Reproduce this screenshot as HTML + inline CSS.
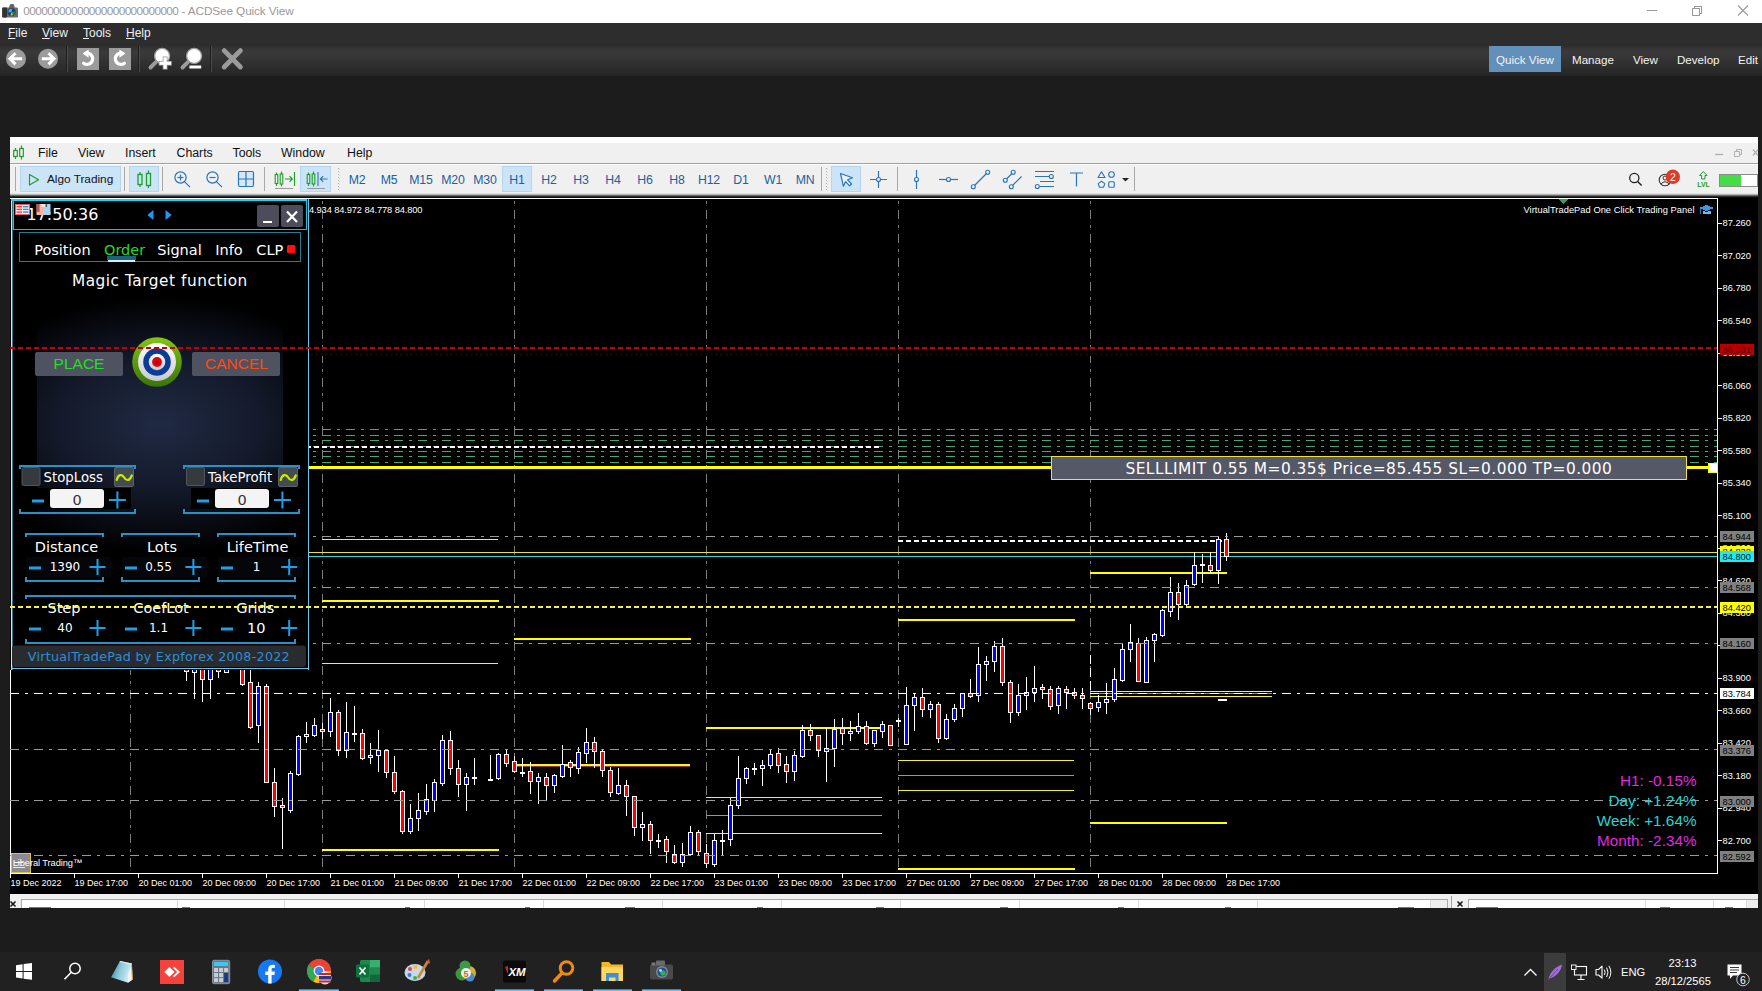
<!DOCTYPE html><html><head><meta charset="utf-8"><title>ACDSee Quick View</title><style>
html,body{margin:0;padding:0}
body{width:1762px;height:991px;overflow:hidden;background:#1c1c1c;position:relative;font-family:'Liberation Sans',sans-serif}
.abs{position:absolute}
#title{left:0;top:0;width:1762px;height:23px;background:#fff}
#title .t{position:absolute;left:23.3px;top:4.4px;font-size:11.8px;color:#999;white-space:nowrap;}
#menu{left:0;top:23px;width:1762px;height:21px;background:#2d2d2d}
#menu span{position:absolute;top:3px;font-size:12px;color:#f0f0f0}
#menu u{text-decoration:underline;text-underline-offset:1px}
#tb{left:0;top:44px;width:1762px;height:32px;background:linear-gradient(#2b2b2b,#3a3a3a 25%,#252525)}
#modes span{position:absolute;top:53px;font-size:11.6px;color:#f4f4f4;white-space:nowrap}
#qv{left:1489px;top:46px;width:72px;height:26px;background:#6390bb}
#mt{left:10px;top:137px;width:1748px;height:59px;background:#f0f0f0}
#mt .w{position:absolute;left:0;top:0;width:100%;height:6px;background:#fff}
#mt .ln{position:absolute;left:0;top:26px;width:100%;height:1px;background:#a0a0a0}
#mt .ln2{position:absolute;left:0;top:27px;width:100%;height:1px;background:#fff}
.mm{position:absolute;top:146px;font-size:12.3px;color:#111;white-space:nowrap}
.tf{position:absolute;top:166px;width:32px;height:26px;line-height:28px;text-align:center;font-size:12.3px;color:#22609c;letter-spacing:-0.2px}
.sel{background:#cce4f7;box-shadow:inset 0 0 0 1px #b4d6f0}
.vsep{position:absolute;top:167px;width:1px;height:24px;background:#a8a8a8}
#task{left:0;top:952px;width:1762px;height:39px;background:#212121}
#task .tx{position:absolute;color:#fff;font-size:12px;white-space:nowrap}
</style></head><body>
<div id="title" class="abs"><span class="t"><span id="zz" style="letter-spacing:-0.6px">00000000000000000000000000</span><span id="rest" style="letter-spacing:-0.12px"> - ACDSee Quick View</span></span></div>
<div id="menu" class="abs"><span style="left:8px"><u>F</u>ile</span><span style="left:42px"><u>V</u>iew</span><span style="left:83px"><u>T</u>ools</span><span style="left:126px"><u>H</u>elp</span></div>
<div id="tb" class="abs"></div>
<div id="qv" class="abs"></div>
<div id="modes"><span style="left:1496px">Quick View</span><span style="left:1572px">Manage</span><span style="left:1633px">View</span><span style="left:1677px">Develop</span><span style="left:1738px">Edit</span></div>
<div id="mt" class="abs"><div class="w"></div><div class="ln"></div><div class="ln2"></div></div>
<span class="mm" style="left:38px">File</span>
<span class="mm" style="left:78px">View</span>
<span class="mm" style="left:125px">Insert</span>
<span class="mm" style="left:176.5px">Charts</span>
<span class="mm" style="left:232.5px">Tools</span>
<span class="mm" style="left:281px">Window</span>
<span class="mm" style="left:347px">Help</span>
<div class="abs sel" style="left:20px;top:166px;width:101px;height:26px"></div>
<span class="mm" style="left:47px;top:172px;font-size:11.8px">Algo Trading</span>
<div class="abs sel" style="left:129px;top:166px;width:30px;height:26px"></div>
<div class="abs sel" style="left:300px;top:166px;width:31px;height:26px"></div>
<div class="abs sel" style="left:831px;top:166px;width:30px;height:26px"></div>
<div class="tf" style="left:341px">M2</div>
<div class="tf" style="left:373px">M5</div>
<div class="tf" style="left:405px">M15</div>
<div class="tf" style="left:437px">M20</div>
<div class="tf" style="left:469px">M30</div>
<div class="tf sel" style="left:502px;width:30px">H1</div>
<div class="tf" style="left:533px">H2</div>
<div class="tf" style="left:565px">H3</div>
<div class="tf" style="left:597px">H4</div>
<div class="tf" style="left:629px">H6</div>
<div class="tf" style="left:661px">H8</div>
<div class="tf" style="left:693px">H12</div>
<div class="tf" style="left:725px">D1</div>
<div class="tf" style="left:757px">W1</div>
<div class="tf" style="left:789px">MN</div>
<div class="vsep" style="left:15px"></div>
<div class="vsep" style="left:124px"></div>
<div class="vsep" style="left:162px"></div>
<div class="vsep" style="left:264px"></div>
<div class="vsep" style="left:821px"></div>
<div class="vsep" style="left:897px"></div>
<div class="vsep" style="left:1134px"></div>
<svg class="abs" style="left:0;top:0" width="1762" height="991" viewBox="0 0 1762 991" shape-rendering="crispEdges">
<g id="chart"><rect x="10" y="196" width="1748" height="698" fill="#000"/>
<rect x="10" y="193" width="1748" height="1" fill="#e2e2e2"/>
<rect x="10" y="194" width="1748" height="1" fill="#b4b4b4"/>
<rect x="10" y="195" width="1748" height="1" fill="#6a6a6a"/>
<rect x="10" y="196" width="1748" height="1" fill="#2c2c2c"/>
<rect x="10" y="197" width="1748" height="1" fill="#0c0c0c"/>
<rect x="10" y="198" width="1708" height="1" fill="#fff"/>
<rect x="1717" y="198" width="1" height="676" fill="#fff"/>
<rect x="10" y="873" width="1708" height="1" fill="#fff"/>
<rect x="10" y="199" width="1" height="675" fill="#fff"/>
<line x1="130.5" y1="199" x2="130.5" y2="873" stroke="#7c7c7c" stroke-width="1" stroke-dasharray="9 6 3 6" stroke-dashoffset="13"/>
<line x1="322.5" y1="199" x2="322.5" y2="873" stroke="#7c7c7c" stroke-width="1" stroke-dasharray="9 6 3 6" stroke-dashoffset="13"/>
<line x1="514.5" y1="199" x2="514.5" y2="873" stroke="#7c7c7c" stroke-width="1" stroke-dasharray="9 6 3 6" stroke-dashoffset="13"/>
<line x1="706.5" y1="199" x2="706.5" y2="873" stroke="#7c7c7c" stroke-width="1" stroke-dasharray="9 6 3 6" stroke-dashoffset="13"/>
<line x1="898.5" y1="199" x2="898.5" y2="873" stroke="#7c7c7c" stroke-width="1" stroke-dasharray="9 6 3 6" stroke-dashoffset="13"/>
<line x1="1090.5" y1="199" x2="1090.5" y2="873" stroke="#7c7c7c" stroke-width="1" stroke-dasharray="9 6 3 6" stroke-dashoffset="13"/>
<line x1="298" y1="429.5" x2="1717" y2="429.5" stroke="#4aa578" stroke-width="1" stroke-dasharray="8.5 6 3 6.5" stroke-dashoffset="0"/>
<line x1="298" y1="435.5" x2="1717" y2="435.5" stroke="#4aa578" stroke-width="1" stroke-dasharray="8.5 6 3 6.5" stroke-dashoffset="0"/>
<line x1="298" y1="440.5" x2="1717" y2="440.5" stroke="#4aa578" stroke-width="1" stroke-dasharray="8.5 6 3 6.5" stroke-dashoffset="0"/>
<line x1="298" y1="446.5" x2="1717" y2="446.5" stroke="#4aa578" stroke-width="1" stroke-dasharray="8.5 6 3 6.5" stroke-dashoffset="0"/>
<line x1="298" y1="451.5" x2="1717" y2="451.5" stroke="#4aa578" stroke-width="1" stroke-dasharray="8.5 6 3 6.5" stroke-dashoffset="0"/>
<line x1="298" y1="456.5" x2="1717" y2="456.5" stroke="#4aa578" stroke-width="1" stroke-dasharray="8.5 6 3 6.5" stroke-dashoffset="0"/>
<line x1="298" y1="462.5" x2="1717" y2="462.5" stroke="#4aa578" stroke-width="1" stroke-dasharray="8.5 6 3 6.5" stroke-dashoffset="0"/>
<line x1="298" y1="467.5" x2="1717" y2="467.5" stroke="#4aa578" stroke-width="1" stroke-dasharray="8.5 6 3 6.5" stroke-dashoffset="0"/>
<rect x="322" y="539" width="176" height="1" fill="#f4f03c"/>
<rect x="322" y="600" width="177" height="2" fill="#ffff00"/>
<rect x="322" y="663" width="176" height="1" fill="#f4f03c"/>
<rect x="322" y="849" width="177" height="2" fill="#ffff00"/>
<rect x="514" y="638" width="177" height="2" fill="#ffff00"/>
<rect x="514" y="764" width="176" height="2" fill="#f4f03c"/>
<rect x="514" y="766" width="176" height="1" fill="#8a3c14"/>
<rect x="706" y="727" width="177" height="2" fill="#ffff00"/>
<rect x="706" y="797" width="176" height="1" fill="#f4f03c"/>
<rect x="706" y="815" width="176" height="1" fill="#e08030"/>
<rect x="706" y="833" width="176" height="1" fill="#f4f03c"/>
<rect x="898" y="619" width="177" height="2" fill="#ffff00"/>
<rect x="898" y="760" width="176" height="1" fill="#f4f03c"/>
<rect x="898" y="775" width="176" height="1" fill="#e08030"/>
<rect x="898" y="790" width="176" height="1" fill="#f4f03c"/>
<rect x="898" y="868" width="177" height="2" fill="#ffff00"/>
<rect x="1090" y="572" width="137" height="2" fill="#ffff00"/>
<rect x="1090" y="822" width="137" height="2" fill="#ffff00"/>
<rect x="1090" y="691" width="182" height="1" fill="#f4f03c"/>
<rect x="1090" y="696" width="182" height="1" fill="#f4f03c"/>
<rect x="1090" y="693" width="182" height="1" fill="#e08030"/>
<line x1="1090" y1="693.5" x2="1272" y2="693.5" stroke="#ffffff" stroke-width="1" stroke-dasharray="9 6 3 6" stroke-dashoffset="0"/>
<line x1="1090.5" y1="655" x2="1090.5" y2="691" stroke="#ffffff" stroke-width="1" stroke-dasharray="9 4" stroke-dashoffset="0"/>
<rect x="308" y="552" width="1409" height="1" fill="#e8e040"/>
<rect x="308" y="556" width="1409" height="1" fill="#40d0d0"/>
<line x1="309" y1="447.0" x2="879" y2="447.0" stroke="#ffffff" stroke-width="2" stroke-dasharray="5 3" stroke-dashoffset="3"/>
<line x1="898" y1="541.0" x2="1222" y2="541.0" stroke="#ffffff" stroke-width="2" stroke-dasharray="5 3" stroke-dashoffset="0"/>
<rect x="308" y="466" width="1409" height="3" fill="#ffff00"/>
<rect x="186" y="660" width="1" height="21" fill="#fff"/>
<rect x="184" y="660" width="5" height="12" fill="#fff"/>
<rect x="185" y="661" width="3" height="10" fill="#ff0000"/>
<rect x="194" y="660" width="1" height="39" fill="#fff"/>
<rect x="192" y="660" width="5" height="13" fill="#fff"/>
<rect x="193" y="661" width="3" height="11" fill="#0000ff"/>
<rect x="202" y="660" width="1" height="42" fill="#fff"/>
<rect x="200" y="660" width="5" height="20" fill="#fff"/>
<rect x="201" y="661" width="3" height="18" fill="#ff0000"/>
<rect x="210" y="660" width="1" height="39" fill="#fff"/>
<rect x="208" y="660" width="5" height="20" fill="#fff"/>
<rect x="209" y="661" width="3" height="18" fill="#0000ff"/>
<rect x="218" y="660" width="1" height="18" fill="#fff"/>
<rect x="216" y="660" width="5" height="12" fill="#fff"/>
<rect x="217" y="661" width="3" height="10" fill="#ff0000"/>
<rect x="226" y="660" width="1" height="13" fill="#fff"/>
<rect x="224" y="660" width="5" height="13" fill="#fff"/>
<rect x="225" y="661" width="3" height="11" fill="#0000ff"/>
<rect x="242" y="660" width="1" height="26" fill="#fff"/>
<rect x="240" y="660" width="5" height="25" fill="#fff"/>
<rect x="241" y="661" width="3" height="23" fill="#ff0000"/>
<rect x="250" y="670" width="1" height="59" fill="#fff"/>
<rect x="248" y="682" width="5" height="46" fill="#fff"/>
<rect x="249" y="683" width="3" height="44" fill="#ff0000"/>
<rect x="258" y="682" width="1" height="61" fill="#fff"/>
<rect x="256" y="686" width="5" height="40" fill="#fff"/>
<rect x="257" y="687" width="3" height="38" fill="#0000ff"/>
<rect x="266" y="684" width="1" height="99" fill="#fff"/>
<rect x="264" y="686" width="5" height="97" fill="#fff"/>
<rect x="265" y="687" width="3" height="95" fill="#ff0000"/>
<rect x="274" y="768" width="1" height="49" fill="#fff"/>
<rect x="272" y="782" width="5" height="25" fill="#fff"/>
<rect x="273" y="783" width="3" height="23" fill="#ff0000"/>
<rect x="282" y="798" width="1" height="51" fill="#fff"/>
<rect x="280" y="805" width="5" height="3" fill="#fff"/>
<rect x="281" y="806" width="3" height="1" fill="#ff0000"/>
<rect x="290" y="771" width="1" height="42" fill="#fff"/>
<rect x="288" y="773" width="5" height="38" fill="#fff"/>
<rect x="289" y="774" width="3" height="36" fill="#0000ff"/>
<rect x="298" y="735" width="1" height="41" fill="#fff"/>
<rect x="296" y="736" width="5" height="39" fill="#fff"/>
<rect x="297" y="737" width="3" height="37" fill="#0000ff"/>
<rect x="306" y="722" width="1" height="21" fill="#fff"/>
<rect x="304" y="734" width="5" height="3" fill="#fff"/>
<rect x="305" y="735" width="3" height="1" fill="#0000ff"/>
<rect x="314" y="718" width="1" height="19" fill="#fff"/>
<rect x="312" y="725" width="5" height="11" fill="#fff"/>
<rect x="313" y="726" width="3" height="9" fill="#0000ff"/>
<rect x="322" y="723" width="1" height="16" fill="#fff"/>
<rect x="320" y="729" width="5" height="3" fill="#fff"/>
<rect x="321" y="730" width="3" height="1" fill="#ff0000"/>
<rect x="330" y="698" width="1" height="39" fill="#fff"/>
<rect x="328" y="712" width="5" height="20" fill="#fff"/>
<rect x="329" y="713" width="3" height="18" fill="#0000ff"/>
<rect x="338" y="710" width="1" height="46" fill="#fff"/>
<rect x="336" y="712" width="5" height="39" fill="#fff"/>
<rect x="337" y="713" width="3" height="37" fill="#ff0000"/>
<rect x="346" y="702" width="1" height="56" fill="#fff"/>
<rect x="344" y="732" width="5" height="19" fill="#fff"/>
<rect x="345" y="733" width="3" height="17" fill="#0000ff"/>
<rect x="354" y="706" width="1" height="36" fill="#fff"/>
<rect x="352" y="733" width="5" height="2" fill="#fff"/>
<rect x="362" y="729" width="1" height="31" fill="#fff"/>
<rect x="360" y="733" width="5" height="26" fill="#fff"/>
<rect x="361" y="734" width="3" height="24" fill="#ff0000"/>
<rect x="370" y="743" width="1" height="21" fill="#fff"/>
<rect x="368" y="755" width="5" height="3" fill="#fff"/>
<rect x="369" y="756" width="3" height="1" fill="#0000ff"/>
<rect x="378" y="730" width="1" height="42" fill="#fff"/>
<rect x="376" y="750" width="5" height="6" fill="#fff"/>
<rect x="377" y="751" width="3" height="4" fill="#0000ff"/>
<rect x="386" y="749" width="1" height="29" fill="#fff"/>
<rect x="384" y="750" width="5" height="23" fill="#fff"/>
<rect x="385" y="751" width="3" height="21" fill="#ff0000"/>
<rect x="394" y="756" width="1" height="38" fill="#fff"/>
<rect x="392" y="772" width="5" height="20" fill="#fff"/>
<rect x="393" y="773" width="3" height="18" fill="#ff0000"/>
<rect x="402" y="790" width="1" height="44" fill="#fff"/>
<rect x="400" y="791" width="5" height="41" fill="#fff"/>
<rect x="401" y="792" width="3" height="39" fill="#ff0000"/>
<rect x="410" y="804" width="1" height="30" fill="#fff"/>
<rect x="408" y="818" width="5" height="14" fill="#fff"/>
<rect x="409" y="819" width="3" height="12" fill="#0000ff"/>
<rect x="418" y="793" width="1" height="38" fill="#fff"/>
<rect x="416" y="810" width="5" height="9" fill="#fff"/>
<rect x="417" y="811" width="3" height="7" fill="#0000ff"/>
<rect x="426" y="784" width="1" height="31" fill="#fff"/>
<rect x="424" y="799" width="5" height="13" fill="#fff"/>
<rect x="425" y="800" width="3" height="11" fill="#0000ff"/>
<rect x="434" y="779" width="1" height="33" fill="#fff"/>
<rect x="432" y="782" width="5" height="19" fill="#fff"/>
<rect x="433" y="783" width="3" height="17" fill="#0000ff"/>
<rect x="442" y="735" width="1" height="51" fill="#fff"/>
<rect x="440" y="740" width="5" height="44" fill="#fff"/>
<rect x="441" y="741" width="3" height="42" fill="#0000ff"/>
<rect x="450" y="731" width="1" height="44" fill="#fff"/>
<rect x="448" y="740" width="5" height="29" fill="#fff"/>
<rect x="449" y="741" width="3" height="27" fill="#ff0000"/>
<rect x="458" y="760" width="1" height="37" fill="#fff"/>
<rect x="456" y="768" width="5" height="17" fill="#fff"/>
<rect x="457" y="769" width="3" height="15" fill="#ff0000"/>
<rect x="466" y="773" width="1" height="38" fill="#fff"/>
<rect x="464" y="777" width="5" height="8" fill="#fff"/>
<rect x="465" y="778" width="3" height="6" fill="#0000ff"/>
<rect x="474" y="758" width="1" height="27" fill="#fff"/>
<rect x="472" y="777" width="5" height="2" fill="#fff"/>
<rect x="490" y="755" width="1" height="25" fill="#fff"/>
<rect x="488" y="779" width="5" height="2" fill="#fff"/>
<rect x="498" y="753" width="1" height="27" fill="#fff"/>
<rect x="496" y="754" width="5" height="25" fill="#fff"/>
<rect x="497" y="755" width="3" height="23" fill="#0000ff"/>
<rect x="506" y="749" width="1" height="18" fill="#fff"/>
<rect x="504" y="754" width="5" height="10" fill="#fff"/>
<rect x="505" y="755" width="3" height="8" fill="#ff0000"/>
<rect x="514" y="756" width="1" height="17" fill="#fff"/>
<rect x="512" y="761" width="5" height="11" fill="#fff"/>
<rect x="513" y="762" width="3" height="9" fill="#ff0000"/>
<rect x="522" y="758" width="1" height="19" fill="#fff"/>
<rect x="520" y="772" width="5" height="2" fill="#fff"/>
<rect x="530" y="762" width="1" height="32" fill="#fff"/>
<rect x="528" y="771" width="5" height="11" fill="#fff"/>
<rect x="529" y="772" width="3" height="9" fill="#ff0000"/>
<rect x="538" y="773" width="1" height="31" fill="#fff"/>
<rect x="536" y="777" width="5" height="5" fill="#fff"/>
<rect x="537" y="778" width="3" height="3" fill="#0000ff"/>
<rect x="546" y="773" width="1" height="28" fill="#fff"/>
<rect x="544" y="777" width="5" height="9" fill="#fff"/>
<rect x="545" y="778" width="3" height="7" fill="#ff0000"/>
<rect x="554" y="774" width="1" height="19" fill="#fff"/>
<rect x="552" y="775" width="5" height="11" fill="#fff"/>
<rect x="553" y="776" width="3" height="9" fill="#0000ff"/>
<rect x="562" y="745" width="1" height="33" fill="#fff"/>
<rect x="560" y="764" width="5" height="13" fill="#fff"/>
<rect x="561" y="765" width="3" height="11" fill="#0000ff"/>
<rect x="570" y="760" width="1" height="17" fill="#fff"/>
<rect x="568" y="762" width="5" height="6" fill="#fff"/>
<rect x="569" y="763" width="3" height="4" fill="#ff0000"/>
<rect x="578" y="747" width="1" height="27" fill="#fff"/>
<rect x="576" y="752" width="5" height="17" fill="#fff"/>
<rect x="577" y="753" width="3" height="15" fill="#0000ff"/>
<rect x="586" y="728" width="1" height="35" fill="#fff"/>
<rect x="584" y="742" width="5" height="12" fill="#fff"/>
<rect x="585" y="743" width="3" height="10" fill="#0000ff"/>
<rect x="594" y="737" width="1" height="31" fill="#fff"/>
<rect x="592" y="742" width="5" height="10" fill="#fff"/>
<rect x="593" y="743" width="3" height="8" fill="#ff0000"/>
<rect x="602" y="749" width="1" height="28" fill="#fff"/>
<rect x="600" y="751" width="5" height="20" fill="#fff"/>
<rect x="601" y="752" width="3" height="18" fill="#ff0000"/>
<rect x="610" y="767" width="1" height="30" fill="#fff"/>
<rect x="608" y="770" width="5" height="23" fill="#fff"/>
<rect x="609" y="771" width="3" height="21" fill="#ff0000"/>
<rect x="618" y="768" width="1" height="27" fill="#fff"/>
<rect x="616" y="785" width="5" height="9" fill="#fff"/>
<rect x="617" y="786" width="3" height="7" fill="#0000ff"/>
<rect x="626" y="780" width="1" height="36" fill="#fff"/>
<rect x="624" y="785" width="5" height="12" fill="#fff"/>
<rect x="625" y="786" width="3" height="10" fill="#ff0000"/>
<rect x="634" y="796" width="1" height="40" fill="#fff"/>
<rect x="632" y="796" width="5" height="32" fill="#fff"/>
<rect x="633" y="797" width="3" height="30" fill="#ff0000"/>
<rect x="642" y="812" width="1" height="29" fill="#fff"/>
<rect x="640" y="824" width="5" height="4" fill="#fff"/>
<rect x="641" y="825" width="3" height="2" fill="#0000ff"/>
<rect x="650" y="821" width="1" height="33" fill="#fff"/>
<rect x="648" y="824" width="5" height="17" fill="#fff"/>
<rect x="649" y="825" width="3" height="15" fill="#ff0000"/>
<rect x="658" y="834" width="1" height="14" fill="#fff"/>
<rect x="656" y="840" width="5" height="2" fill="#fff"/>
<rect x="666" y="836" width="1" height="27" fill="#fff"/>
<rect x="664" y="839" width="5" height="13" fill="#fff"/>
<rect x="665" y="840" width="3" height="11" fill="#ff0000"/>
<rect x="674" y="845" width="1" height="19" fill="#fff"/>
<rect x="672" y="854" width="5" height="9" fill="#fff"/>
<rect x="673" y="855" width="3" height="7" fill="#ff0000"/>
<rect x="682" y="843" width="1" height="24" fill="#fff"/>
<rect x="680" y="854" width="5" height="9" fill="#fff"/>
<rect x="681" y="855" width="3" height="7" fill="#0000ff"/>
<rect x="690" y="826" width="1" height="30" fill="#fff"/>
<rect x="688" y="832" width="5" height="23" fill="#fff"/>
<rect x="689" y="833" width="3" height="21" fill="#0000ff"/>
<rect x="698" y="830" width="1" height="26" fill="#fff"/>
<rect x="696" y="832" width="5" height="20" fill="#fff"/>
<rect x="697" y="833" width="3" height="18" fill="#ff0000"/>
<rect x="706" y="844" width="1" height="24" fill="#fff"/>
<rect x="704" y="853" width="5" height="11" fill="#fff"/>
<rect x="705" y="854" width="3" height="9" fill="#ff0000"/>
<rect x="714" y="834" width="1" height="33" fill="#fff"/>
<rect x="712" y="840" width="5" height="25" fill="#fff"/>
<rect x="713" y="841" width="3" height="23" fill="#0000ff"/>
<rect x="722" y="830" width="1" height="26" fill="#fff"/>
<rect x="720" y="840" width="5" height="2" fill="#fff"/>
<rect x="730" y="798" width="1" height="48" fill="#fff"/>
<rect x="728" y="805" width="5" height="35" fill="#fff"/>
<rect x="729" y="806" width="3" height="33" fill="#0000ff"/>
<rect x="738" y="756" width="1" height="53" fill="#fff"/>
<rect x="736" y="778" width="5" height="28" fill="#fff"/>
<rect x="737" y="779" width="3" height="26" fill="#0000ff"/>
<rect x="746" y="767" width="1" height="17" fill="#fff"/>
<rect x="744" y="768" width="5" height="11" fill="#fff"/>
<rect x="745" y="769" width="3" height="9" fill="#0000ff"/>
<rect x="754" y="763" width="1" height="12" fill="#fff"/>
<rect x="752" y="768" width="5" height="2" fill="#fff"/>
<rect x="762" y="760" width="1" height="26" fill="#fff"/>
<rect x="760" y="765" width="5" height="4" fill="#fff"/>
<rect x="761" y="766" width="3" height="2" fill="#0000ff"/>
<rect x="770" y="749" width="1" height="20" fill="#fff"/>
<rect x="768" y="754" width="5" height="12" fill="#fff"/>
<rect x="769" y="755" width="3" height="10" fill="#0000ff"/>
<rect x="778" y="748" width="1" height="25" fill="#fff"/>
<rect x="776" y="753" width="5" height="13" fill="#fff"/>
<rect x="777" y="754" width="3" height="11" fill="#ff0000"/>
<rect x="786" y="756" width="1" height="27" fill="#fff"/>
<rect x="784" y="764" width="5" height="8" fill="#fff"/>
<rect x="785" y="765" width="3" height="6" fill="#ff0000"/>
<rect x="794" y="751" width="1" height="30" fill="#fff"/>
<rect x="792" y="755" width="5" height="17" fill="#fff"/>
<rect x="793" y="756" width="3" height="15" fill="#0000ff"/>
<rect x="802" y="725" width="1" height="33" fill="#fff"/>
<rect x="800" y="730" width="5" height="27" fill="#fff"/>
<rect x="801" y="731" width="3" height="25" fill="#0000ff"/>
<rect x="810" y="724" width="1" height="17" fill="#fff"/>
<rect x="808" y="730" width="5" height="6" fill="#fff"/>
<rect x="809" y="731" width="3" height="4" fill="#ff0000"/>
<rect x="818" y="735" width="1" height="22" fill="#fff"/>
<rect x="816" y="735" width="5" height="16" fill="#fff"/>
<rect x="817" y="736" width="3" height="14" fill="#ff0000"/>
<rect x="826" y="728" width="1" height="54" fill="#fff"/>
<rect x="824" y="748" width="5" height="4" fill="#fff"/>
<rect x="825" y="749" width="3" height="2" fill="#0000ff"/>
<rect x="834" y="719" width="1" height="48" fill="#fff"/>
<rect x="832" y="729" width="5" height="20" fill="#fff"/>
<rect x="833" y="730" width="3" height="18" fill="#0000ff"/>
<rect x="842" y="718" width="1" height="27" fill="#fff"/>
<rect x="840" y="728" width="5" height="6" fill="#fff"/>
<rect x="841" y="729" width="3" height="4" fill="#ff0000"/>
<rect x="850" y="721" width="1" height="20" fill="#fff"/>
<rect x="848" y="731" width="5" height="3" fill="#fff"/>
<rect x="849" y="732" width="3" height="1" fill="#0000ff"/>
<rect x="858" y="713" width="1" height="21" fill="#fff"/>
<rect x="856" y="726" width="5" height="6" fill="#fff"/>
<rect x="857" y="727" width="3" height="4" fill="#0000ff"/>
<rect x="866" y="721" width="1" height="24" fill="#fff"/>
<rect x="864" y="726" width="5" height="18" fill="#fff"/>
<rect x="865" y="727" width="3" height="16" fill="#ff0000"/>
<rect x="874" y="730" width="1" height="17" fill="#fff"/>
<rect x="872" y="730" width="5" height="14" fill="#fff"/>
<rect x="873" y="731" width="3" height="12" fill="#0000ff"/>
<rect x="882" y="721" width="1" height="17" fill="#fff"/>
<rect x="880" y="724" width="5" height="8" fill="#fff"/>
<rect x="881" y="725" width="3" height="6" fill="#0000ff"/>
<rect x="890" y="725" width="1" height="21" fill="#fff"/>
<rect x="888" y="725" width="5" height="21" fill="#fff"/>
<rect x="889" y="726" width="3" height="19" fill="#ff0000"/>
<rect x="898" y="718" width="1" height="9" fill="#fff"/>
<rect x="896" y="720" width="5" height="2" fill="#fff"/>
<rect x="906" y="687" width="1" height="58" fill="#fff"/>
<rect x="904" y="705" width="5" height="40" fill="#fff"/>
<rect x="905" y="706" width="3" height="38" fill="#0000ff"/>
<rect x="914" y="693" width="1" height="38" fill="#fff"/>
<rect x="912" y="697" width="5" height="9" fill="#fff"/>
<rect x="913" y="698" width="3" height="7" fill="#0000ff"/>
<rect x="922" y="688" width="1" height="29" fill="#fff"/>
<rect x="920" y="697" width="5" height="13" fill="#fff"/>
<rect x="921" y="698" width="3" height="11" fill="#ff0000"/>
<rect x="930" y="701" width="1" height="17" fill="#fff"/>
<rect x="928" y="704" width="5" height="6" fill="#fff"/>
<rect x="929" y="705" width="3" height="4" fill="#0000ff"/>
<rect x="938" y="702" width="1" height="41" fill="#fff"/>
<rect x="936" y="704" width="5" height="35" fill="#fff"/>
<rect x="937" y="705" width="3" height="33" fill="#ff0000"/>
<rect x="946" y="714" width="1" height="26" fill="#fff"/>
<rect x="944" y="719" width="5" height="20" fill="#fff"/>
<rect x="945" y="720" width="3" height="18" fill="#0000ff"/>
<rect x="954" y="704" width="1" height="18" fill="#fff"/>
<rect x="952" y="708" width="5" height="12" fill="#fff"/>
<rect x="953" y="709" width="3" height="10" fill="#0000ff"/>
<rect x="962" y="693" width="1" height="24" fill="#fff"/>
<rect x="960" y="693" width="5" height="16" fill="#fff"/>
<rect x="961" y="694" width="3" height="14" fill="#0000ff"/>
<rect x="970" y="679" width="1" height="19" fill="#fff"/>
<rect x="968" y="693" width="5" height="4" fill="#fff"/>
<rect x="969" y="694" width="3" height="2" fill="#ff0000"/>
<rect x="978" y="647" width="1" height="55" fill="#fff"/>
<rect x="976" y="664" width="5" height="32" fill="#fff"/>
<rect x="977" y="665" width="3" height="30" fill="#0000ff"/>
<rect x="986" y="656" width="1" height="25" fill="#fff"/>
<rect x="984" y="661" width="5" height="4" fill="#fff"/>
<rect x="985" y="662" width="3" height="2" fill="#0000ff"/>
<rect x="994" y="641" width="1" height="31" fill="#fff"/>
<rect x="992" y="646" width="5" height="16" fill="#fff"/>
<rect x="993" y="647" width="3" height="14" fill="#0000ff"/>
<rect x="1002" y="638" width="1" height="48" fill="#fff"/>
<rect x="1000" y="646" width="5" height="37" fill="#fff"/>
<rect x="1001" y="647" width="3" height="35" fill="#ff0000"/>
<rect x="1010" y="680" width="1" height="43" fill="#fff"/>
<rect x="1008" y="682" width="5" height="31" fill="#fff"/>
<rect x="1009" y="683" width="3" height="29" fill="#ff0000"/>
<rect x="1018" y="684" width="1" height="32" fill="#fff"/>
<rect x="1016" y="695" width="5" height="18" fill="#fff"/>
<rect x="1017" y="696" width="3" height="16" fill="#0000ff"/>
<rect x="1026" y="677" width="1" height="33" fill="#fff"/>
<rect x="1024" y="692" width="5" height="4" fill="#fff"/>
<rect x="1025" y="693" width="3" height="2" fill="#0000ff"/>
<rect x="1034" y="666" width="1" height="36" fill="#fff"/>
<rect x="1032" y="688" width="5" height="5" fill="#fff"/>
<rect x="1033" y="689" width="3" height="3" fill="#0000ff"/>
<rect x="1042" y="684" width="1" height="15" fill="#fff"/>
<rect x="1040" y="687" width="5" height="3" fill="#fff"/>
<rect x="1041" y="688" width="3" height="1" fill="#ff0000"/>
<rect x="1050" y="686" width="1" height="24" fill="#fff"/>
<rect x="1048" y="689" width="5" height="18" fill="#fff"/>
<rect x="1049" y="690" width="3" height="16" fill="#ff0000"/>
<rect x="1058" y="686" width="1" height="28" fill="#fff"/>
<rect x="1056" y="688" width="5" height="18" fill="#fff"/>
<rect x="1057" y="689" width="3" height="16" fill="#0000ff"/>
<rect x="1066" y="686" width="1" height="23" fill="#fff"/>
<rect x="1064" y="689" width="5" height="4" fill="#fff"/>
<rect x="1065" y="690" width="3" height="2" fill="#ff0000"/>
<rect x="1074" y="688" width="1" height="11" fill="#fff"/>
<rect x="1072" y="692" width="5" height="4" fill="#fff"/>
<rect x="1073" y="693" width="3" height="2" fill="#ff0000"/>
<rect x="1082" y="688" width="1" height="21" fill="#fff"/>
<rect x="1080" y="695" width="5" height="4" fill="#fff"/>
<rect x="1081" y="696" width="3" height="2" fill="#ff0000"/>
<rect x="1090" y="702" width="1" height="13" fill="#fff"/>
<rect x="1088" y="703" width="5" height="6" fill="#fff"/>
<rect x="1089" y="704" width="3" height="4" fill="#ff0000"/>
<rect x="1098" y="695" width="1" height="17" fill="#fff"/>
<rect x="1096" y="702" width="5" height="6" fill="#fff"/>
<rect x="1097" y="703" width="3" height="4" fill="#0000ff"/>
<rect x="1106" y="683" width="1" height="31" fill="#fff"/>
<rect x="1104" y="699" width="5" height="4" fill="#fff"/>
<rect x="1105" y="700" width="3" height="2" fill="#0000ff"/>
<rect x="1114" y="668" width="1" height="34" fill="#fff"/>
<rect x="1112" y="679" width="5" height="21" fill="#fff"/>
<rect x="1113" y="680" width="3" height="19" fill="#0000ff"/>
<rect x="1122" y="644" width="1" height="38" fill="#fff"/>
<rect x="1120" y="649" width="5" height="32" fill="#fff"/>
<rect x="1121" y="650" width="3" height="30" fill="#0000ff"/>
<rect x="1130" y="624" width="1" height="38" fill="#fff"/>
<rect x="1128" y="642" width="5" height="8" fill="#fff"/>
<rect x="1129" y="643" width="3" height="6" fill="#0000ff"/>
<rect x="1138" y="638" width="1" height="44" fill="#fff"/>
<rect x="1136" y="643" width="5" height="39" fill="#fff"/>
<rect x="1137" y="644" width="3" height="37" fill="#ff0000"/>
<rect x="1146" y="637" width="1" height="46" fill="#fff"/>
<rect x="1144" y="640" width="5" height="43" fill="#fff"/>
<rect x="1145" y="641" width="3" height="41" fill="#0000ff"/>
<rect x="1154" y="633" width="1" height="29" fill="#fff"/>
<rect x="1152" y="634" width="5" height="7" fill="#fff"/>
<rect x="1153" y="635" width="3" height="5" fill="#0000ff"/>
<rect x="1162" y="609" width="1" height="28" fill="#fff"/>
<rect x="1160" y="610" width="5" height="26" fill="#fff"/>
<rect x="1161" y="611" width="3" height="24" fill="#0000ff"/>
<rect x="1170" y="577" width="1" height="40" fill="#fff"/>
<rect x="1168" y="592" width="5" height="20" fill="#fff"/>
<rect x="1169" y="593" width="3" height="18" fill="#0000ff"/>
<rect x="1178" y="583" width="1" height="37" fill="#fff"/>
<rect x="1176" y="592" width="5" height="13" fill="#fff"/>
<rect x="1177" y="593" width="3" height="11" fill="#ff0000"/>
<rect x="1186" y="580" width="1" height="27" fill="#fff"/>
<rect x="1184" y="585" width="5" height="20" fill="#fff"/>
<rect x="1185" y="586" width="3" height="18" fill="#0000ff"/>
<rect x="1194" y="552" width="1" height="34" fill="#fff"/>
<rect x="1192" y="565" width="5" height="20" fill="#fff"/>
<rect x="1193" y="566" width="3" height="18" fill="#0000ff"/>
<rect x="1202" y="554" width="1" height="29" fill="#fff"/>
<rect x="1200" y="564" width="5" height="2" fill="#fff"/>
<rect x="1210" y="552" width="1" height="21" fill="#fff"/>
<rect x="1208" y="565" width="5" height="6" fill="#fff"/>
<rect x="1209" y="566" width="3" height="4" fill="#ff0000"/>
<rect x="1218" y="537" width="1" height="47" fill="#fff"/>
<rect x="1216" y="539" width="5" height="32" fill="#fff"/>
<rect x="1217" y="540" width="3" height="30" fill="#0000ff"/>
<rect x="1226" y="533" width="1" height="28" fill="#fff"/>
<rect x="1224" y="539" width="5" height="18" fill="#fff"/>
<rect x="1225" y="540" width="3" height="16" fill="#ff0000"/>
<line x1="309" y1="536.5" x2="1717" y2="536.5" stroke="#9a9a9a" stroke-width="1" stroke-dasharray="9 6 3 6" stroke-dashoffset="11"/>
<line x1="309" y1="587.5" x2="1717" y2="587.5" stroke="#9a9a9a" stroke-width="1" stroke-dasharray="9 6 3 6" stroke-dashoffset="11"/>
<line x1="309" y1="643.5" x2="1717" y2="643.5" stroke="#9a9a9a" stroke-width="1" stroke-dasharray="9 6 3 6" stroke-dashoffset="11"/>
<line x1="10" y1="749.5" x2="1717" y2="749.5" stroke="#9a9a9a" stroke-width="1" stroke-dasharray="9 6 3 6" stroke-dashoffset="0"/>
<line x1="10" y1="800.5" x2="1717" y2="800.5" stroke="#9a9a9a" stroke-width="1" stroke-dasharray="9 6 3 6" stroke-dashoffset="0"/>
<line x1="10" y1="855.5" x2="1717" y2="855.5" stroke="#9a9a9a" stroke-width="1" stroke-dasharray="9 6 3 6" stroke-dashoffset="0"/>
<line x1="10" y1="693.5" x2="1717" y2="693.5" stroke="#ffffff" stroke-width="1" stroke-dasharray="9 6 3 6" stroke-dashoffset="0"/>
<rect x="1218" y="699" width="9" height="2" fill="#fff"/></g>
<g id="panel" shape-rendering="auto"><defs><radialGradient id="pg" gradientUnits="userSpaceOnUse" cx="160" cy="424" r="128" gradientTransform="translate(160 424) scale(1.6 1) translate(-160 -424)"><stop offset="0" stop-color="#202a44"/><stop offset="0.5" stop-color="#141a2b"/><stop offset="0.8" stop-color="#080b12"/><stop offset="1" stop-color="#000"/></radialGradient><linearGradient id="gg" x1="0" y1="0" x2="0" y2="1"><stop offset="0" stop-color="#86c418"/><stop offset="0.5" stop-color="#5c9c0c"/><stop offset="1" stop-color="#3a7406"/></linearGradient><linearGradient id="wg" x1="0" y1="0" x2="0" y2="1"><stop offset="0" stop-color="#ffffff"/><stop offset="1" stop-color="#c8c8d0"/></linearGradient></defs>
<rect x="10" y="199" width="299" height="471" fill="#000"/>
<rect x="37" y="288" width="246" height="280" fill="url(#pg)"/>
<rect x="11" y="199" width="1" height="471" fill="#b4eeff"/>
<rect x="12" y="199" width="1" height="471" fill="#3a7088"/>
<rect x="308" y="199" width="1" height="471" fill="#6cc4ec"/>
<rect x="11" y="668" width="298" height="1" fill="#6cc4ec"/>
<rect x="11" y="199" width="296" height="2" fill="#10d8f8"/>
<rect x="13" y="201" width="1" height="28" fill="#28c0d8"/>
<rect x="306" y="201" width="1" height="28" fill="#28c0d8"/>
<rect x="13" y="229" width="294" height="1" fill="#28b8cc"/>
<text x="26.5" y="219.7" fill="#fff" text-anchor="start" style="font-family:'DejaVu Sans',sans-serif;font-size:16px">17:50:36</text>
<rect x="15.5" y="204.5" width="14" height="10" fill="#f8eeee" stroke="#e86060" stroke-width="1"/>
<rect x="16.5" y="206" width="5.5" height="1.4" fill="#e04848"/>
<rect x="23" y="206" width="5.5" height="1.4" fill="#4888d8"/>
<rect x="16.5" y="208.7" width="5.5" height="1.4" fill="#e04848"/>
<rect x="23" y="208.7" width="5.5" height="1.4" fill="#4888d8"/>
<rect x="16.5" y="211.4" width="5.5" height="1.4" fill="#e04848"/>
<rect x="23" y="211.4" width="5.5" height="1.4" fill="#4888d8"/>
<rect x="36.5" y="204" width="7" height="11" fill="#f4b4ac"/>
<rect x="43" y="204" width="7.5" height="11" fill="#a8d4f4"/>
<rect x="41" y="204" width="5.5" height="3" fill="#e4e4e4"/>
<rect x="37" y="204" width="2.6" height="8" fill="#e04838"/>
<rect x="45.5" y="204" width="1.6" height="3" fill="#555"/>
<path d="M153.5 210 V220 L147.3 215 Z" fill="#2196f3"/><path d="M165.5 210 V220 L171.7 215 Z" fill="#2196f3"/>
<rect x="257" y="205" width="22" height="22" fill="#4b4d5b" rx="2"/>
<rect x="281" y="205" width="22" height="22" fill="#4b4d5b" rx="2"/>
<rect x="263" y="221" width="9" height="2" fill="#fff"/>
<path d="M287 211.5 L297 222 M297 211.5 L287 222" stroke="#fff" stroke-width="2.2" fill="none"/>
<rect x="19.5" y="232.5" width="281" height="29" fill="none" stroke="#247c94" stroke-width="1"/>
<text x="34.2" y="254.6" fill="#fff" text-anchor="start" style="font-family:'DejaVu Sans',sans-serif;font-size:14.5px">Position</text>
<text x="104" y="254.6" fill="#24dc24" text-anchor="start" style="font-family:'DejaVu Sans',sans-serif;font-size:14.5px">Order</text>
<text x="157.2" y="254.6" fill="#fff" text-anchor="start" style="font-family:'DejaVu Sans',sans-serif;font-size:14.5px">Signal</text>
<text x="215.3" y="254.6" fill="#fff" text-anchor="start" style="font-family:'DejaVu Sans',sans-serif;font-size:14.5px">Info</text>
<text x="256.3" y="254.6" fill="#fff" text-anchor="start" style="font-family:'DejaVu Sans',sans-serif;font-size:14.5px">CLP</text>
<rect x="107" y="256" width="29" height="4" fill="#1f5f80"/>
<rect x="108" y="260" width="27" height="2" fill="#d4ecf4"/>
<rect x="287" y="245" width="8.5" height="8" fill="#ff1010" rx="1.5"/>
<text x="71.9" y="285.6" fill="#fff" text-anchor="start" style="font-family:'DejaVu Sans',sans-serif;font-size:15.3px" textLength="175.4">Magic Target function</text>
<rect x="35" y="352" width="88" height="24" fill="#4f5260" rx="2"/>
<rect x="192" y="352" width="88" height="24" fill="#4f5260" rx="2"/>
<text x="79" y="369.2" fill="#22e022" text-anchor="middle" style="font-family:'Liberation Sans',sans-serif;font-size:15.5px">PLACE</text>
<text x="236.5" y="369.2" fill="#ff4a10" text-anchor="middle" style="font-family:'Liberation Sans',sans-serif;font-size:15.5px">CANCEL</text>
<circle cx="157" cy="362" r="24.8" fill="url(#gg)"/>
<circle cx="157" cy="362" r="19" fill="url(#wg)"/>
<circle cx="157" cy="362" r="13.8" fill="#0a3c98"/>
<circle cx="157" cy="362" r="8.3" fill="url(#wg)"/>
<circle cx="157" cy="362" r="4.9" fill="#e00010"/>
<circle cx="157" cy="362" r="1.5" fill="#800008"/>
<rect x="27" y="488" width="104" height="21" fill="#000"/>
<rect x="19" y="465" width="117" height="2" fill="#2a90c8"/><rect x="19" y="465" width="2" height="4" fill="#2a90c8"/><rect x="134" y="465" width="2" height="4" fill="#2a90c8"/><rect x="19" y="512" width="117" height="2" fill="#2a90c8"/><rect x="19" y="509" width="2" height="4" fill="#2a90c8"/><rect x="134" y="509" width="2" height="4" fill="#2a90c8"/>
<rect x="22.0" y="467.5" width="18" height="18" fill="#343a3e" stroke="#50565a" stroke-width="1" rx="1.5"/>
<text x="43.5" y="482.3" fill="#fff" text-anchor="start" style="font-family:'DejaVu Sans',sans-serif;font-size:13.3px">StopLoss</text>
<rect x="114.5" y="467.5" width="19" height="19" fill="#454b4f" stroke="#5c6266" stroke-width="1" rx="1.5"/>
<path d="M116.7 480 C118.2 474,122.2 474,124.2 477.5 S129.6 481.2,131.8 475.5" stroke="#c4f000" stroke-width="2.2" fill="none" stroke-linecap="round"/>
<rect x="32.0" y="499.5" width="12" height="3" fill="#1e9fe8"/>
<rect x="50" y="489" width="54" height="19" fill="#f4f4f4" rx="3"/>
<text x="77" y="505" fill="#333" text-anchor="middle" style="font-family:'DejaVu Sans',sans-serif;font-size:14.5px">0</text>
<rect x="108.9" y="499" width="17" height="2" fill="#1e9fe8"/><rect x="116.4" y="491.5" width="2" height="17" fill="#1e9fe8"/>
<rect x="191" y="488" width="105" height="21" fill="#000"/>
<rect x="183" y="465" width="117" height="2" fill="#2a90c8"/><rect x="183" y="465" width="2" height="4" fill="#2a90c8"/><rect x="298" y="465" width="2" height="4" fill="#2a90c8"/><rect x="183" y="512" width="117" height="2" fill="#2a90c8"/><rect x="183" y="509" width="2" height="4" fill="#2a90c8"/><rect x="298" y="509" width="2" height="4" fill="#2a90c8"/>
<rect x="186.5" y="467.5" width="18" height="18" fill="#343a3e" stroke="#50565a" stroke-width="1" rx="1.5"/>
<text x="208" y="482.3" fill="#fff" text-anchor="start" style="font-family:'DejaVu Sans',sans-serif;font-size:13.3px">TakeProfit</text>
<rect x="278.5" y="467.5" width="19" height="19" fill="#454b4f" stroke="#5c6266" stroke-width="1" rx="1.5"/>
<path d="M280.7 480 C282.2 474,286.2 474,288.2 477.5 S293.6 481.2,295.8 475.5" stroke="#c4f000" stroke-width="2.2" fill="none" stroke-linecap="round"/>
<rect x="197.0" y="499.5" width="12" height="3" fill="#1e9fe8"/>
<rect x="215" y="489" width="54" height="19" fill="#f4f4f4" rx="3"/>
<text x="242" y="505" fill="#333" text-anchor="middle" style="font-family:'DejaVu Sans',sans-serif;font-size:14.5px">0</text>
<rect x="273.9" y="499" width="17" height="2" fill="#1e9fe8"/><rect x="281.4" y="491.5" width="2" height="17" fill="#1e9fe8"/>
<rect x="26" y="557" width="85" height="21" fill="#04060a"/>
<rect x="25" y="533" width="79" height="2" fill="#2a90c8"/><rect x="25" y="533" width="2" height="4" fill="#2a90c8"/><rect x="102" y="533" width="2" height="4" fill="#2a90c8"/><rect x="25" y="580" width="79" height="2" fill="#2a90c8"/><rect x="25" y="577" width="2" height="4" fill="#2a90c8"/><rect x="102" y="577" width="2" height="4" fill="#2a90c8"/>
<text x="66.5" y="551.8" fill="#fff" text-anchor="middle" style="font-family:'DejaVu Sans',sans-serif;font-size:14.5px">Distance</text>
<text x="65" y="571" fill="#fff" text-anchor="middle" style="font-family:'DejaVu Sans',sans-serif;font-size:12px">1390</text>
<rect x="29.0" y="566.5" width="12" height="3" fill="#1e9fe8"/>
<rect x="89.5" y="566" width="16" height="2" fill="#1e9fe8"/><rect x="96.5" y="559.0" width="2" height="16" fill="#1e9fe8"/>
<rect x="122" y="557" width="85" height="21" fill="#04060a"/>
<rect x="121" y="533" width="79" height="2" fill="#2a90c8"/><rect x="121" y="533" width="2" height="4" fill="#2a90c8"/><rect x="198" y="533" width="2" height="4" fill="#2a90c8"/><rect x="121" y="580" width="79" height="2" fill="#2a90c8"/><rect x="121" y="577" width="2" height="4" fill="#2a90c8"/><rect x="198" y="577" width="2" height="4" fill="#2a90c8"/>
<text x="162" y="551.8" fill="#fff" text-anchor="middle" style="font-family:'DejaVu Sans',sans-serif;font-size:14.5px">Lots</text>
<text x="158.5" y="571" fill="#fff" text-anchor="middle" style="font-family:'DejaVu Sans',sans-serif;font-size:12px">0.55</text>
<rect x="125.0" y="566.5" width="12" height="3" fill="#1e9fe8"/>
<rect x="185.4" y="566" width="16" height="2" fill="#1e9fe8"/><rect x="192.4" y="559.0" width="2" height="16" fill="#1e9fe8"/>
<rect x="218" y="557" width="85" height="21" fill="#04060a"/>
<rect x="217" y="533" width="79" height="2" fill="#2a90c8"/><rect x="217" y="533" width="2" height="4" fill="#2a90c8"/><rect x="294" y="533" width="2" height="4" fill="#2a90c8"/><rect x="217" y="580" width="79" height="2" fill="#2a90c8"/><rect x="217" y="577" width="2" height="4" fill="#2a90c8"/><rect x="294" y="577" width="2" height="4" fill="#2a90c8"/>
<text x="257.5" y="551.8" fill="#fff" text-anchor="middle" style="font-family:'DejaVu Sans',sans-serif;font-size:14.5px">LifeTime</text>
<text x="256.5" y="571" fill="#fff" text-anchor="middle" style="font-family:'DejaVu Sans',sans-serif;font-size:12px">1</text>
<rect x="221.0" y="566.5" width="12" height="3" fill="#1e9fe8"/>
<rect x="281.2" y="566" width="16" height="2" fill="#1e9fe8"/><rect x="288.2" y="559.0" width="2" height="16" fill="#1e9fe8"/>
<rect x="25" y="595" width="271" height="2" fill="#2a90c8"/><rect x="25" y="595" width="2" height="4" fill="#2a90c8"/><rect x="294" y="595" width="2" height="4" fill="#2a90c8"/><rect x="25" y="642" width="271" height="2" fill="#2a90c8"/><rect x="25" y="639" width="2" height="4" fill="#2a90c8"/><rect x="294" y="639" width="2" height="4" fill="#2a90c8"/>
<text x="64" y="612.6" fill="#fff" text-anchor="middle" style="font-family:'DejaVu Sans',sans-serif;font-size:14.5px">Step</text>
<text x="65" y="632.2" fill="#fff" text-anchor="middle" style="font-family:'DejaVu Sans',sans-serif;font-size:12px">40</text>
<rect x="29.0" y="627.5" width="12" height="3" fill="#1e9fe8"/>
<rect x="89.5" y="627" width="16" height="2" fill="#1e9fe8"/><rect x="96.5" y="620.0" width="2" height="16" fill="#1e9fe8"/>
<text x="161" y="612.6" fill="#fff" text-anchor="middle" style="font-family:'DejaVu Sans',sans-serif;font-size:14.5px">CoefLot</text>
<text x="158.5" y="632.2" fill="#fff" text-anchor="middle" style="font-family:'DejaVu Sans',sans-serif;font-size:12px">1.1</text>
<rect x="125.0" y="627.5" width="12" height="3" fill="#1e9fe8"/>
<rect x="185.4" y="627" width="16" height="2" fill="#1e9fe8"/><rect x="192.4" y="620.0" width="2" height="16" fill="#1e9fe8"/>
<text x="255.3" y="612.6" fill="#fff" text-anchor="middle" style="font-family:'DejaVu Sans',sans-serif;font-size:14.5px">Grids</text>
<text x="256.3" y="633.2" fill="#fff" text-anchor="middle" style="font-family:'DejaVu Sans',sans-serif;font-size:14.5px">10</text>
<rect x="221.0" y="627.5" width="12" height="3" fill="#1e9fe8"/>
<rect x="281.2" y="627" width="16" height="2" fill="#1e9fe8"/><rect x="288.2" y="620.0" width="2" height="16" fill="#1e9fe8"/>
<rect x="12" y="645.5" width="294" height="21.5" fill="#2a2b2f" rx="3"/>
<text x="27.7" y="660.8" fill="#2a8fd8" text-anchor="start" style="font-family:'DejaVu Sans',sans-serif;font-size:12.7px" textLength="262">VirtualTradePad by Expforex 2008-2022</text></g>
<g id="over"><line x1="10" y1="348.0" x2="1717" y2="348.0" stroke="#c80000" stroke-width="2" stroke-dasharray="5 3" stroke-dashoffset="0"/>
<line x1="310" y1="354.5" x2="1717" y2="354.5" stroke="#1a0000" stroke-width="3" stroke-dasharray="3 2" stroke-dashoffset="0"/>
<line x1="10" y1="607.0" x2="1717" y2="607.0" stroke="#f4f040" stroke-width="2" stroke-dasharray="5 3" stroke-dashoffset="0"/>
<rect x="1051.5" y="456.5" width="635" height="23" fill="#555866" stroke="#f0e040" stroke-width="1"/>
<text x="1125.4" y="473.6" textLength="486.5" fill="#fff" shape-rendering="auto" style="font-family:'DejaVu Sans',sans-serif;font-size:15.4px">SELLLIMIT 0.55 M=0.35$ Price=85.455 SL=0.000 TP=0.000</text>
<rect x="1708" y="463" width="9" height="9" fill="#fff" stroke="#ffff00" stroke-width="1"/>
<text x="309" y="213" textLength="113.5" fill="#fff" style="font-family:'Liberation Sans',sans-serif;font-size:9.3px">4.934 84.972 84.778 84.800</text>
<text x="1694.5" y="213" text-anchor="end" fill="#fff" style="font-family:'Liberation Sans',sans-serif;font-size:9.3px" textLength="171">VirtualTradePad One Click Trading Panel</text>
<path d="M1699 208 L1706.5 205 L1714 208 L1706.5 211 Z" fill="#3a9ae8"/><path d="M1702.5 210.5 V213.5 Q1706.5 215.5 1710.5 213.5 V210.5 L1706.5 212.2 Z" fill="#6fb8f0"/><rect x="1699.5" y="208" width="1" height="6" fill="#2a7ac8"/>
<path d="M1558 199 H1568 L1563 204 Z" fill="#3c9a6a"/>
<text x="1696.5" y="785.5" text-anchor="end" fill="#e426e4" style="font-family:'Liberation Sans',sans-serif;font-size:15.3px">H1: -0.15%</text>
<text x="1696.5" y="805.5" text-anchor="end" fill="#22d6d6" style="font-family:'Liberation Sans',sans-serif;font-size:15.3px">Day: +1.24%</text>
<text x="1696.5" y="825.5" text-anchor="end" fill="#22d6d6" style="font-family:'Liberation Sans',sans-serif;font-size:15.3px">Week: +1.64%</text>
<text x="1696.5" y="845.5" text-anchor="end" fill="#e426e4" style="font-family:'Liberation Sans',sans-serif;font-size:15.3px">Month: -2.34%</text>
<rect x="1718" y="223" width="4" height="1" fill="#fff"/>
<text x="1722.5" y="226.2" fill="#fff" style="font-family:'Liberation Sans',sans-serif;font-size:9.3px">87.260</text>
<rect x="1718" y="255" width="4" height="1" fill="#fff"/>
<text x="1722.5" y="258.7" fill="#fff" style="font-family:'Liberation Sans',sans-serif;font-size:9.3px">87.020</text>
<rect x="1718" y="288" width="4" height="1" fill="#fff"/>
<text x="1722.5" y="291.2" fill="#fff" style="font-family:'Liberation Sans',sans-serif;font-size:9.3px">86.780</text>
<rect x="1718" y="320" width="4" height="1" fill="#fff"/>
<text x="1722.5" y="323.7" fill="#fff" style="font-family:'Liberation Sans',sans-serif;font-size:9.3px">86.540</text>
<rect x="1718" y="353" width="4" height="1" fill="#fff"/>
<text x="1722.5" y="356.2" fill="#fff" style="font-family:'Liberation Sans',sans-serif;font-size:9.3px">86.300</text>
<rect x="1718" y="385" width="4" height="1" fill="#fff"/>
<text x="1722.5" y="388.6" fill="#fff" style="font-family:'Liberation Sans',sans-serif;font-size:9.3px">86.060</text>
<rect x="1718" y="418" width="4" height="1" fill="#fff"/>
<text x="1722.5" y="421.1" fill="#fff" style="font-family:'Liberation Sans',sans-serif;font-size:9.3px">85.820</text>
<rect x="1718" y="450" width="4" height="1" fill="#fff"/>
<text x="1722.5" y="453.6" fill="#fff" style="font-family:'Liberation Sans',sans-serif;font-size:9.3px">85.580</text>
<rect x="1718" y="483" width="4" height="1" fill="#fff"/>
<text x="1722.5" y="486.1" fill="#fff" style="font-family:'Liberation Sans',sans-serif;font-size:9.3px">85.340</text>
<rect x="1718" y="515" width="4" height="1" fill="#fff"/>
<text x="1722.5" y="518.6" fill="#fff" style="font-family:'Liberation Sans',sans-serif;font-size:9.3px">85.100</text>
<rect x="1718" y="548" width="4" height="1" fill="#fff"/>
<text x="1722.5" y="551.1" fill="#fff" style="font-family:'Liberation Sans',sans-serif;font-size:9.3px">84.860</text>
<rect x="1718" y="580" width="4" height="1" fill="#fff"/>
<text x="1722.5" y="583.6" fill="#fff" style="font-family:'Liberation Sans',sans-serif;font-size:9.3px">84.620</text>
<rect x="1718" y="613" width="4" height="1" fill="#fff"/>
<text x="1722.5" y="616.1" fill="#fff" style="font-family:'Liberation Sans',sans-serif;font-size:9.3px">84.380</text>
<rect x="1718" y="645" width="4" height="1" fill="#fff"/>
<text x="1722.5" y="648.6" fill="#fff" style="font-family:'Liberation Sans',sans-serif;font-size:9.3px">84.140</text>
<rect x="1718" y="678" width="4" height="1" fill="#fff"/>
<text x="1722.5" y="681.0" fill="#fff" style="font-family:'Liberation Sans',sans-serif;font-size:9.3px">83.900</text>
<rect x="1718" y="710" width="4" height="1" fill="#fff"/>
<text x="1722.5" y="713.5" fill="#fff" style="font-family:'Liberation Sans',sans-serif;font-size:9.3px">83.660</text>
<rect x="1718" y="743" width="4" height="1" fill="#fff"/>
<text x="1722.5" y="746.0" fill="#fff" style="font-family:'Liberation Sans',sans-serif;font-size:9.3px">83.420</text>
<rect x="1718" y="775" width="4" height="1" fill="#fff"/>
<text x="1722.5" y="778.5" fill="#fff" style="font-family:'Liberation Sans',sans-serif;font-size:9.3px">83.180</text>
<rect x="1718" y="808" width="4" height="1" fill="#fff"/>
<text x="1722.5" y="811.0" fill="#fff" style="font-family:'Liberation Sans',sans-serif;font-size:9.3px">82.940</text>
<rect x="1718" y="840" width="4" height="1" fill="#fff"/>
<text x="1722.5" y="843.5" fill="#fff" style="font-family:'Liberation Sans',sans-serif;font-size:9.3px">82.700</text>
<rect x="1720" y="344" width="34" height="11" fill="#b80000"/>
<text x="1722.5" y="352.9" fill="#500000" style="font-family:'Liberation Sans',sans-serif;font-size:9.3px">86.331</text>
<rect x="1720" y="531" width="34" height="11" fill="#808080"/>
<text x="1722.5" y="539.9" fill="#000" style="font-family:'Liberation Sans',sans-serif;font-size:9.3px">84.944</text>
<rect x="1720" y="546" width="34" height="11" fill="#ffff00"/>
<text x="1722.5" y="554.9" fill="#000" style="font-family:'Liberation Sans',sans-serif;font-size:9.3px">84.832</text>
<rect x="1720" y="551" width="34" height="11" fill="#22e8f0"/>
<text x="1722.5" y="559.9" fill="#001428" style="font-family:'Liberation Sans',sans-serif;font-size:9.3px">84.800</text>
<rect x="1720" y="582" width="34" height="11" fill="#808080"/>
<text x="1722.5" y="590.9" fill="#000" style="font-family:'Liberation Sans',sans-serif;font-size:9.3px">84.568</text>
<rect x="1720" y="602" width="34" height="11" fill="#ffff00"/>
<text x="1722.5" y="610.9" fill="#000" style="font-family:'Liberation Sans',sans-serif;font-size:9.3px">84.420</text>
<rect x="1720" y="638" width="34" height="11" fill="#808080"/>
<text x="1722.5" y="646.9" fill="#000" style="font-family:'Liberation Sans',sans-serif;font-size:9.3px">84.160</text>
<rect x="1720" y="688" width="34" height="11" fill="#ffffff"/>
<text x="1722.5" y="696.9" fill="#000" style="font-family:'Liberation Sans',sans-serif;font-size:9.3px">83.784</text>
<rect x="1720" y="745" width="34" height="11" fill="#808080"/>
<text x="1722.5" y="753.9" fill="#000" style="font-family:'Liberation Sans',sans-serif;font-size:9.3px">83.376</text>
<rect x="1720" y="796" width="34" height="11" fill="#808080"/>
<text x="1722.5" y="804.9" fill="#000" style="font-family:'Liberation Sans',sans-serif;font-size:9.3px">83.000</text>
<rect x="1720" y="851" width="34" height="11" fill="#808080"/>
<text x="1722.5" y="859.9" fill="#000" style="font-family:'Liberation Sans',sans-serif;font-size:9.3px">82.592</text>
<rect x="10" y="874" width="1" height="4" fill="#fff"/>
<text x="10.5" y="886" fill="#fff" style="font-family:'Liberation Sans',sans-serif;font-size:9.3px;font-size:9px">19 Dec 2022</text>
<rect x="74" y="874" width="1" height="4" fill="#fff"/>
<text x="74.5" y="886" fill="#fff" style="font-family:'Liberation Sans',sans-serif;font-size:9.3px;font-size:9px">19 Dec 17:00</text>
<rect x="138" y="874" width="1" height="4" fill="#fff"/>
<text x="138.5" y="886" fill="#fff" style="font-family:'Liberation Sans',sans-serif;font-size:9.3px;font-size:9px">20 Dec 01:00</text>
<rect x="202" y="874" width="1" height="4" fill="#fff"/>
<text x="202.5" y="886" fill="#fff" style="font-family:'Liberation Sans',sans-serif;font-size:9.3px;font-size:9px">20 Dec 09:00</text>
<rect x="266" y="874" width="1" height="4" fill="#fff"/>
<text x="266.5" y="886" fill="#fff" style="font-family:'Liberation Sans',sans-serif;font-size:9.3px;font-size:9px">20 Dec 17:00</text>
<rect x="330" y="874" width="1" height="4" fill="#fff"/>
<text x="330.5" y="886" fill="#fff" style="font-family:'Liberation Sans',sans-serif;font-size:9.3px;font-size:9px">21 Dec 01:00</text>
<rect x="394" y="874" width="1" height="4" fill="#fff"/>
<text x="394.5" y="886" fill="#fff" style="font-family:'Liberation Sans',sans-serif;font-size:9.3px;font-size:9px">21 Dec 09:00</text>
<rect x="458" y="874" width="1" height="4" fill="#fff"/>
<text x="458.5" y="886" fill="#fff" style="font-family:'Liberation Sans',sans-serif;font-size:9.3px;font-size:9px">21 Dec 17:00</text>
<rect x="522" y="874" width="1" height="4" fill="#fff"/>
<text x="522.5" y="886" fill="#fff" style="font-family:'Liberation Sans',sans-serif;font-size:9.3px;font-size:9px">22 Dec 01:00</text>
<rect x="586" y="874" width="1" height="4" fill="#fff"/>
<text x="586.5" y="886" fill="#fff" style="font-family:'Liberation Sans',sans-serif;font-size:9.3px;font-size:9px">22 Dec 09:00</text>
<rect x="650" y="874" width="1" height="4" fill="#fff"/>
<text x="650.5" y="886" fill="#fff" style="font-family:'Liberation Sans',sans-serif;font-size:9.3px;font-size:9px">22 Dec 17:00</text>
<rect x="714" y="874" width="1" height="4" fill="#fff"/>
<text x="714.5" y="886" fill="#fff" style="font-family:'Liberation Sans',sans-serif;font-size:9.3px;font-size:9px">23 Dec 01:00</text>
<rect x="778" y="874" width="1" height="4" fill="#fff"/>
<text x="778.5" y="886" fill="#fff" style="font-family:'Liberation Sans',sans-serif;font-size:9.3px;font-size:9px">23 Dec 09:00</text>
<rect x="842" y="874" width="1" height="4" fill="#fff"/>
<text x="842.5" y="886" fill="#fff" style="font-family:'Liberation Sans',sans-serif;font-size:9.3px;font-size:9px">23 Dec 17:00</text>
<rect x="906" y="874" width="1" height="4" fill="#fff"/>
<text x="906.5" y="886" fill="#fff" style="font-family:'Liberation Sans',sans-serif;font-size:9.3px;font-size:9px">27 Dec 01:00</text>
<rect x="970" y="874" width="1" height="4" fill="#fff"/>
<text x="970.5" y="886" fill="#fff" style="font-family:'Liberation Sans',sans-serif;font-size:9.3px;font-size:9px">27 Dec 09:00</text>
<rect x="1034" y="874" width="1" height="4" fill="#fff"/>
<text x="1034.5" y="886" fill="#fff" style="font-family:'Liberation Sans',sans-serif;font-size:9.3px;font-size:9px">27 Dec 17:00</text>
<rect x="1098" y="874" width="1" height="4" fill="#fff"/>
<text x="1098.5" y="886" fill="#fff" style="font-family:'Liberation Sans',sans-serif;font-size:9.3px;font-size:9px">28 Dec 01:00</text>
<rect x="1162" y="874" width="1" height="4" fill="#fff"/>
<text x="1162.5" y="886" fill="#fff" style="font-family:'Liberation Sans',sans-serif;font-size:9.3px;font-size:9px">28 Dec 09:00</text>
<rect x="1226" y="874" width="1" height="4" fill="#fff"/>
<text x="1226.5" y="886" fill="#fff" style="font-family:'Liberation Sans',sans-serif;font-size:9.3px;font-size:9px">28 Dec 17:00</text>
<rect x="11.5" y="853.5" width="19" height="19" fill="#8a8a90" stroke="#d8c838" stroke-width="1"/>
<text x="12.7" y="866.3" fill="#fff" style="font-family:'Liberation Sans',sans-serif;font-size:9.3px" textLength="69.5">Liberal Trading™</text>
<rect x="14" y="862" width="9" height="1" fill="#fff"/>
<rect x="13" y="867" width="12" height="1" fill="#e8e8e8"/></g>
<g id="bottomstrip"><rect x="10" y="894" width="1748" height="14" fill="#f0f0f0"/><rect x="21.5" y="899.5" width="1426" height="14" fill="#fff" stroke="#a8a8a8" stroke-width="1"/><rect x="1468" y="899" width="290" height="9" fill="#fff"/><rect x="1468" y="899" width="290" height="1" fill="#a8a8a8"/><rect x="1468" y="899" width="1" height="9" fill="#a8a8a8"/><rect x="1451" y="896" width="1" height="12" fill="#a0a0a0"/><rect x="1430" y="900" width="17" height="8" fill="#eee"/><rect x="1746" y="900" width="12" height="8" fill="#eee"/><rect x="177" y="900" width="1" height="8" fill="#dcdcdc"/><rect x="284" y="900" width="1" height="8" fill="#dcdcdc"/><rect x="424" y="900" width="1" height="8" fill="#dcdcdc"/><rect x="543" y="900" width="1" height="8" fill="#dcdcdc"/><rect x="662" y="900" width="1" height="8" fill="#dcdcdc"/><rect x="781" y="900" width="1" height="8" fill="#dcdcdc"/><rect x="900" y="900" width="1" height="8" fill="#dcdcdc"/><rect x="1019" y="900" width="1" height="8" fill="#dcdcdc"/><rect x="1138" y="900" width="1" height="8" fill="#dcdcdc"/><rect x="1257" y="900" width="1" height="8" fill="#dcdcdc"/><rect x="1430" y="900" width="1" height="8" fill="#dcdcdc"/><rect x="1645" y="900" width="1" height="8" fill="#dcdcdc"/><rect x="1713" y="900" width="1" height="8" fill="#dcdcdc"/><rect x="1746" y="900" width="1" height="8" fill="#dcdcdc"/><rect x="0" y="908" width="1762" height="10" fill="#1c1c1c"/><path d="M10.5 901.5 L15.5 906.5 M15.5 901.5 L10.5 906.5" stroke="#111" stroke-width="1.5" shape-rendering="auto"/><path d="M1457.5 901.5 L1462.5 906.5 M1462.5 901.5 L1457.5 906.5" stroke="#111" stroke-width="1.5" shape-rendering="auto"/><rect x="29" y="907" width="22" height="1" fill="#777"/><rect x="182" y="907" width="8" height="1" fill="#777"/><rect x="405" y="907" width="5" height="1" fill="#777"/><rect x="525" y="907" width="5" height="1" fill="#777"/><rect x="625" y="907" width="10" height="1" fill="#777"/><rect x="757" y="907" width="6" height="1" fill="#777"/><rect x="876" y="907" width="8" height="1" fill="#777"/><rect x="1000" y="907" width="8" height="1" fill="#777"/><rect x="1118" y="907" width="6" height="1" fill="#777"/><rect x="1225" y="907" width="6" height="1" fill="#777"/><rect x="1398" y="907" width="16" height="1" fill="#777"/><rect x="1476" y="907" width="22" height="1" fill="#777"/><rect x="1660" y="907" width="10" height="1" fill="#777"/><rect x="1725" y="907" width="8" height="1" fill="#777"/></g>
<g id="icons" shape-rendering="auto"><g id="cam"><rect x="2.2" y="7.6" width="15.8" height="9.8" rx="1.2" fill="#6e6e6e"/><rect x="2.2" y="7.6" width="4.8" height="9.8" rx="1" fill="#333"/><path d="M8.8 8 L10 4.6 H13.8 L15 8 Z" fill="#666"/><rect x="10" y="4.2" width="3.8" height="1.6" rx="0.8" fill="#555c66"/><circle cx="11.6" cy="12" r="4.3" fill="#4a4a4a"/><circle cx="11.6" cy="12" r="3.4" fill="#0c3c86"/><path d="M11.6 12 L8.4 12.6 A3.4 3.4 0 0 1 12.4 8.7 Z" fill="#58a8f0"/><path d="M11.6 12 L14.9 11.2 A3.4 3.4 0 0 1 13 15.1 Z" fill="#1e8a3c"/><path d="M11.6 12 L13 15.1 A3.4 3.4 0 0 1 10.4 15.2 Z" fill="#c8d030"/></g><path d="M1647 10.5 H1657" stroke="#9a9a9a" stroke-width="1" shape-rendering="crispEdges"/><path d="M1692.5 8.5 H1699.5 V15.5 H1692.5 Z M1694.5 8.5 V6.5 H1701.5 V13.5 H1699.5" stroke="#9a9a9a" stroke-width="1" fill="none" shape-rendering="crispEdges"/><path d="M1738 5.5 L1748 15.5 M1748 5.5 L1738 15.5" stroke="#9a9a9a" stroke-width="1.1" fill="none"/><circle cx="16" cy="58.8" r="10" fill="#9b9b9b"/><path d="M22.2 58.8 H11 M15.5 53.2 L10 58.8 L15.5 64.4" stroke="#fff" stroke-width="3" fill="none" stroke-linejoin="miter"/><circle cx="48" cy="58.8" r="10" fill="#9b9b9b"/><path d="M41.8 58.8 H53 M48.5 53.2 L54 58.8 L48.5 64.4" stroke="#fff" stroke-width="3" fill="none" stroke-linejoin="miter"/><rect x="66" y="46" width="1" height="26" fill="#1e1e1e" shape-rendering="crispEdges"/><rect x="67" y="46" width="1" height="26" fill="#4c4c4c" shape-rendering="crispEdges"/><rect x="138" y="46" width="1" height="26" fill="#1e1e1e" shape-rendering="crispEdges"/><rect x="139" y="46" width="1" height="26" fill="#4c4c4c" shape-rendering="crispEdges"/><rect x="210" y="46" width="1" height="26" fill="#1e1e1e" shape-rendering="crispEdges"/><rect x="211" y="46" width="1" height="26" fill="#4c4c4c" shape-rendering="crispEdges"/><rect x="77" y="48" width="22" height="22" fill="#9b9b9b"/><rect x="109" y="48" width="22" height="22" fill="#9b9b9b"/><path d="M85.6 53.4 A5.6 5.6 0 1 1 83.6 63.2" stroke="#fff" stroke-width="3.2" fill="none" stroke-linecap="round"/><path d="M82.6 53.6 L88.6 49.4 L88.6 57.8 Z" fill="#fff"/><path d="M122.4 53.4 A5.6 5.6 0 1 0 124.4 63.2" stroke="#fff" stroke-width="3.2" fill="none" stroke-linecap="round"/><path d="M125.4 53.6 L119.4 49.4 L119.4 57.8 Z" fill="#fff"/><path d="M155.9 62.1 L150.5 67.5" stroke="#9b9b9b" stroke-width="4" stroke-linecap="round"/><circle cx="162.1" cy="55.9" r="7.5" fill="#fff" stroke="#9b9b9b" stroke-width="1.3"/><path d="M187.9 62.1 L182.5 67.5" stroke="#9b9b9b" stroke-width="4" stroke-linecap="round"/><circle cx="194.1" cy="55.9" r="7.5" fill="#fff" stroke="#9b9b9b" stroke-width="1.3"/><rect x="158.7" y="61" width="13.1" height="4.6" fill="#9b9b9b"/><rect x="162.7" y="56.5" width="4.8" height="13.1" fill="#9b9b9b"/><rect x="159.5" y="61.8" width="11.5" height="3" fill="#fff"/><rect x="163.5" y="57.3" width="3.2" height="11.5" fill="#fff"/><rect x="189.4" y="65.5" width="11.8" height="3" fill="#fff"/><path d="M224.2 50.6 L240.4 67 M240.4 50.6 L224.2 67" stroke="#9b9b9b" stroke-width="4.8" stroke-linecap="round" fill="none"/><path d="M15.5 148 V150.5 M15.5 156.5 V159" stroke="#1e9e28" stroke-width="1.2"/><rect x="13.7" y="150.5" width="3.6" height="6.0" fill="none" stroke="#1e9e28" stroke-width="1.2"/><path d="M21.5 145.5 V148.5 M21.5 156.5 V159.5" stroke="#1e9e28" stroke-width="1.2"/><rect x="19.7" y="148.5" width="3.6" height="8.0" fill="none" stroke="#1e9e28" stroke-width="1.2"/><path d="M29.5 174.5 L38.5 179.7 L29.5 185 Z" fill="none" stroke="#1e9e28" stroke-width="1.2" stroke-linejoin="round"/><path d="M140 172 V174.5 M140 184.5 V187" stroke="#1e9e28" stroke-width="1.3"/><rect x="138.0" y="174.5" width="4" height="10.0" fill="none" stroke="#1e9e28" stroke-width="1.3"/><path d="M148.5 170.5 V173.5 M148.5 185.5 V188" stroke="#1e9e28" stroke-width="1.3"/><rect x="146.5" y="173.5" width="4" height="12.0" fill="none" stroke="#1e9e28" stroke-width="1.3"/><circle cx="180.5" cy="177.5" r="5.6" fill="none" stroke="#2874b8" stroke-width="1.2"/><path d="M184.7 181.8 L190.0 187.2" stroke="#2874b8" stroke-width="1.2"/><path d="M177.5 177.5 H183.5" stroke="#2874b8" stroke-width="1.2"/><path d="M180.5 174.5 V180.5" stroke="#2874b8" stroke-width="1.2"/><circle cx="212.5" cy="177.5" r="5.6" fill="none" stroke="#2874b8" stroke-width="1.2"/><path d="M216.7 181.8 L222.0 187.2" stroke="#2874b8" stroke-width="1.2"/><path d="M209.5 177.5 H215.5" stroke="#2874b8" stroke-width="1.2"/><rect x="238.5" y="171.5" width="15" height="15" rx="1.5" fill="#d4e8f8" stroke="#2874b8" stroke-width="1.2"/><path d="M246 171.5 V186.5 M238.5 179 H253.5" stroke="#2874b8" stroke-width="1.2"/><path d="M276.5 172.5 V174.5 M276.5 183.5 V186" stroke="#1e9e28" stroke-width="1.1"/><rect x="275.2" y="174.5" width="2.6" height="9.0" fill="none" stroke="#1e9e28" stroke-width="1.1"/><path d="M281.5 171.5 V174 M281.5 184 V186.5" stroke="#1e9e28" stroke-width="1.1"/><rect x="280.2" y="174" width="2.6" height="10" fill="none" stroke="#1e9e28" stroke-width="1.1"/><path d="M275 188.5 H293" stroke="#9a9a9a" stroke-width="1"/><path d="M308.5 172.5 V174.5 M308.5 183.5 V186" stroke="#1e9e28" stroke-width="1.1"/><rect x="307.2" y="174.5" width="2.6" height="9.0" fill="none" stroke="#1e9e28" stroke-width="1.1"/><path d="M313.5 171.5 V174 M313.5 184 V186.5" stroke="#1e9e28" stroke-width="1.1"/><rect x="312.2" y="174" width="2.6" height="10" fill="none" stroke="#1e9e28" stroke-width="1.1"/><path d="M307 188.5 H325" stroke="#9a9a9a" stroke-width="1"/><path d="M285 179 H292 M289.5 176.2 L292.4 179 L289.5 181.8 M294.5 172 V186" stroke="#1e9e28" stroke-width="1.1" fill="none"/><path d="M318 172 V186 M320.5 179 H327.5 M323.2 176.2 L320.3 179 L323.2 181.8" stroke="#2874b8" stroke-width="1.1" fill="none"/><rect x="338" y="168" width="1" height="1" fill="#b0b0b0"/><rect x="339" y="169" width="1" height="1" fill="#d8d8d8"/><rect x="338" y="171" width="1" height="1" fill="#b0b0b0"/><rect x="339" y="172" width="1" height="1" fill="#d8d8d8"/><rect x="338" y="174" width="1" height="1" fill="#b0b0b0"/><rect x="339" y="175" width="1" height="1" fill="#d8d8d8"/><rect x="338" y="177" width="1" height="1" fill="#b0b0b0"/><rect x="339" y="178" width="1" height="1" fill="#d8d8d8"/><rect x="338" y="180" width="1" height="1" fill="#b0b0b0"/><rect x="339" y="181" width="1" height="1" fill="#d8d8d8"/><rect x="338" y="183" width="1" height="1" fill="#b0b0b0"/><rect x="339" y="184" width="1" height="1" fill="#d8d8d8"/><rect x="338" y="186" width="1" height="1" fill="#b0b0b0"/><rect x="339" y="187" width="1" height="1" fill="#d8d8d8"/><rect x="338" y="189" width="1" height="1" fill="#b0b0b0"/><rect x="339" y="190" width="1" height="1" fill="#d8d8d8"/><rect x="826" y="168" width="1" height="1" fill="#b0b0b0"/><rect x="827" y="169" width="1" height="1" fill="#d8d8d8"/><rect x="826" y="171" width="1" height="1" fill="#b0b0b0"/><rect x="827" y="172" width="1" height="1" fill="#d8d8d8"/><rect x="826" y="174" width="1" height="1" fill="#b0b0b0"/><rect x="827" y="175" width="1" height="1" fill="#d8d8d8"/><rect x="826" y="177" width="1" height="1" fill="#b0b0b0"/><rect x="827" y="178" width="1" height="1" fill="#d8d8d8"/><rect x="826" y="180" width="1" height="1" fill="#b0b0b0"/><rect x="827" y="181" width="1" height="1" fill="#d8d8d8"/><rect x="826" y="183" width="1" height="1" fill="#b0b0b0"/><rect x="827" y="184" width="1" height="1" fill="#d8d8d8"/><rect x="826" y="186" width="1" height="1" fill="#b0b0b0"/><rect x="827" y="187" width="1" height="1" fill="#d8d8d8"/><rect x="826" y="189" width="1" height="1" fill="#b0b0b0"/><rect x="827" y="190" width="1" height="1" fill="#d8d8d8"/><path d="M840.5 173.5 L852.5 177.8 L847.6 179.8 L851.6 184 L849.6 185.8 L845.6 181.6 L843.4 186.2 Z" fill="#e8f2fc" stroke="#2874b8" stroke-width="1.2" stroke-linejoin="round"/><path d="M878.5 171 V188 M870 179.5 H887" stroke="#2874b8" stroke-width="1.2"/><circle cx="878.5" cy="179.5" r="2" fill="#f0f0f0" stroke="#2874b8" stroke-width="1.1"/><path d="M916.5 170 V189" stroke="#2874b8" stroke-width="1.2"/><circle cx="916.5" cy="179.5" r="2" fill="#f0f0f0" stroke="#2874b8" stroke-width="1.1"/><path d="M939 179.5 H958" stroke="#2874b8" stroke-width="1.2"/><circle cx="948.5" cy="179.5" r="2" fill="#f0f0f0" stroke="#2874b8" stroke-width="1.1"/><path d="M973.5 186.5 L987.5 172.5" stroke="#2874b8" stroke-width="1.2"/><circle cx="973.3" cy="186.7" r="2" fill="#f0f0f0" stroke="#2874b8" stroke-width="1.1"/><circle cx="987.7" cy="172.3" r="2" fill="#f0f0f0" stroke="#2874b8" stroke-width="1.1"/><path d="M1005.5 180 L1013 172.5 M1011.5 186.5 L1021.5 176.5" stroke="#2874b8" stroke-width="1.2"/><circle cx="1005.3" cy="180.2" r="2" fill="#f0f0f0" stroke="#2874b8" stroke-width="1.1"/><circle cx="1013.2" cy="172.3" r="2" fill="#f0f0f0" stroke="#2874b8" stroke-width="1.1"/><circle cx="1011.3" cy="186.7" r="2" fill="#f0f0f0" stroke="#2874b8" stroke-width="1.1"/><path d="M1035 171.5 H1054 M1035 176.5 H1049 M1040 181.5 H1054 M1040 186.5 H1054" stroke="#2874b8" stroke-width="1.2"/><circle cx="1051.3" cy="176.5" r="2" fill="#f0f0f0" stroke="#2874b8" stroke-width="1.1"/><circle cx="1037.3" cy="186.5" r="2" fill="#f0f0f0" stroke="#2874b8" stroke-width="1.1"/><path d="M1070 173 H1083 M1076.5 173 V186.5" stroke="#2874b8" stroke-width="1.2"/><path d="M1101.5 171.8 L1105 177.5 H1098 Z" fill="none" stroke="#2874b8" stroke-width="1.1" stroke-linejoin="round"/><circle cx="1111.5" cy="174.5" r="2.8" fill="none" stroke="#2874b8" stroke-width="1.1"/><path d="M1101.5 181.3 L1104.8 183.6 L1103.5 187.3 H1099.5 L1098.2 183.6 Z" fill="none" stroke="#2874b8" stroke-width="1.1" stroke-linejoin="round"/><rect x="1108.7" y="181.7" width="5.6" height="5.6" rx="1" fill="none" stroke="#2874b8" stroke-width="1.1"/><path d="M1122 178 H1129 L1125.5 181.5 Z" fill="#222"/><circle cx="1634.3" cy="178" r="4.6" fill="none" stroke="#222" stroke-width="1.3"/><path d="M1637.6 181.4 L1641.6 185.4" stroke="#222" stroke-width="1.4"/><circle cx="1665" cy="180" r="5.8" fill="none" stroke="#333" stroke-width="1.1"/><circle cx="1665" cy="178" r="2" fill="none" stroke="#333" stroke-width="1"/><path d="M1661 184 Q1665 179.5 1669 184" fill="none" stroke="#333" stroke-width="1"/><circle cx="1672.8" cy="176.8" r="7.2" fill="#e03a24"/><text x="1672.8" y="180.7" text-anchor="middle" fill="#fff" style="font-family:'Liberation Sans',sans-serif;font-size:10.5px">2</text><path d="M1703.3 171.5 L1707 175.5 H1705 V179 H1701.6 V175.5 H1699.6 Z" fill="none" stroke="#1e9e28" stroke-width="1"/><text x="1703.5" y="187" text-anchor="middle" fill="#1e9e28" style="font-family:'Liberation Sans',sans-serif;font-size:7px;font-weight:bold">LVL</text><rect x="1719.5" y="174.5" width="38" height="12" fill="#fff" stroke="#8c8c8c" stroke-width="1" shape-rendering="crispEdges"/><rect x="1720" y="175" width="21" height="11" fill="#44dd44" shape-rendering="crispEdges"/><path d="M1715 154.5 H1723" stroke="#b0b0b0" stroke-width="1.4"/><path d="M1734.5 151.5 H1739.5 V156.5 H1734.5 Z M1736.5 151.5 V149.5 H1741.5 V154.5 H1739.5" fill="none" stroke="#b0b0b0" stroke-width="1"/><path d="M1753 149.5 L1758 155.5 M1758 149.5 L1753 155.5" stroke="#b0b0b0" stroke-width="1.3"/></g>
</svg>
<div id="task" class="abs"></div>
<svg class="abs" style="left:0;top:952px" width="1762" height="39" viewBox="0 952 1762 39"><path d="M16 965.2 L22.6 964.3 V970.9 H16 Z M23.6 964.1 L32 963 V970.9 H23.6 Z M16 971.9 H22.6 V978.5 L16 977.6 Z M23.6 971.9 H32 V979.8 L23.6 978.7 Z" fill="#fff"/><circle cx="75" cy="968.5" r="5.2" fill="none" stroke="#fff" stroke-width="1.5"/><path d="M71.3 972.3 L64.5 979.3" stroke="#fff" stroke-width="1.6"/><defs><linearGradient id="npg" x1="0" y1="0" x2="1" y2="0.3"><stop offset="0" stop-color="#2a7c94"/><stop offset="0.5" stop-color="#8ccadc"/><stop offset="1" stop-color="#d8eef6"/></linearGradient></defs><path d="M120 961 L131.9 963.6 L132.8 979.4 L128.1 982.8 L111.1 977.2 Z" fill="url(#npg)"/><path d="M127.6 975 L131.6 964.5 L132.3 979.2 L128.1 982.4 Z" fill="#eef4f8"/><path d="M131.9 963.6 L132.8 979.4 L131.9 980 L131.2 964 Z" fill="#c89030"/><path d="M120 961 L131.9 963.6 L131.6 964.6 L119.6 962 Z" fill="#e8f2f6"/><rect x="160" y="960" width="24" height="24" fill="#f6423a"/><path d="M164.3 972 L169.4 966.9 L174.5 972 L169.4 977.1 Z" fill="#fff"/><path d="M173.6 967.4 L178.6 972 L173.6 976.6" fill="none" stroke="#fff" stroke-width="1.9"/><rect x="212.5" y="960.3" width="17.2" height="23.4" rx="1.5" fill="#6c7884" stroke="#8a94a0" stroke-width="1"/><rect x="214" y="962" width="14.1" height="4" fill="#38c8f8"/><rect x="214.0" y="968.0" width="4" height="4" fill="#c8ccd4"/><rect x="219.05" y="968.0" width="4" height="4" fill="#c8ccd4"/><rect x="224.1" y="968.0" width="4" height="4" fill="#c8ccd4"/><rect x="214.0" y="973.05" width="4" height="4" fill="#c8ccd4"/><rect x="219.05" y="973.05" width="4" height="4" fill="#c8ccd4"/><rect x="214.0" y="978.1" width="4" height="4" fill="#c8ccd4"/><rect x="219.05" y="978.1" width="4" height="4" fill="#c8ccd4"/><rect x="224.1" y="973.05" width="4" height="9" fill="#123c86"/><circle cx="270" cy="971.5" r="12" fill="#1877f2"/><path d="M271.6 983.4 V975 H274.4 L274.9 971.6 H271.6 V969.6 C271.6 968.6 272 967.8 273.5 967.8 H275 V964.9 C274.3 964.8 273.4 964.7 272.6 964.7 C269.9 964.7 268.2 966.3 268.2 969.2 V971.6 H265.3 V975 H268.2 V983.4 Z" fill="#fff"/><circle cx="319" cy="971" r="12" fill="#e8453c"/><path d="M319 971 L308.6 965 A12 12 0 0 0 313.5 981.7 Z" fill="#34a853"/><path d="M319 971 L313.5 981.7 A12 12 0 0 0 331 971 Z" fill="#fbbc05"/><path d="M319 971 L331 971 A12 12 0 0 0 308.6 965 Z" fill="#ea4335"/><circle cx="319" cy="971" r="5.4" fill="#fff"/><circle cx="319" cy="971" r="4.2" fill="#4285f4"/><circle cx="325" cy="978" r="6.5" fill="#e8e8f0"/><rect x="319" y="976" width="12" height="3.5" fill="#2a3a8a"/><rect x="319" y="973" width="12" height="2" fill="#c82828"/><rect x="319" y="980.5" width="12" height="2" fill="#c82828"/><rect x="360" y="960" width="20" height="22" rx="1.5" fill="#1d8a4c"/><rect x="370" y="960" width="10" height="7.3" fill="#35b06e"/><rect x="370" y="974.6" width="10" height="7.4" fill="#12683a"/><rect x="356" y="964.5" width="13" height="13" rx="1" fill="#0f703c"/><path d="M359.5 967.5 L365.5 974.5 M365.5 967.5 L359.5 974.5" stroke="#fff" stroke-width="1.6"/><ellipse cx="415" cy="972.5" rx="10.5" ry="8.5" fill="#c8d8e8"/><circle cx="410" cy="969" r="2" fill="#e04040"/><circle cx="415.5" cy="967" r="2" fill="#f0c020"/><circle cx="409.5" cy="975" r="2" fill="#3080e0"/><circle cx="415" cy="978" r="2" fill="#40b040"/><path d="M418 978 L428 961" stroke="#c88a30" stroke-width="2.6"/><path d="M426.6 963 L429 958.5 L430 963.5 Z" fill="#e06020"/><circle cx="462" cy="974" r="6.5" fill="#3a9a3a"/><circle cx="469" cy="973" r="7" fill="#d8b030"/><circle cx="465" cy="966" r="5.5" fill="#3a9a4a"/><circle cx="470" cy="977" r="4.5" fill="#4a8ad0"/><circle cx="466" cy="973" r="5" fill="#f0f0f0"/><text x="466" y="976.5" text-anchor="middle" fill="#c07010" style="font-family:'Liberation Sans',sans-serif;font-size:9px;font-weight:bold">5</text><rect x="503" y="960.5" width="23" height="22" rx="2" fill="#0a0a0a"/><path d="M505 967 L508 966 L508 974 Z" fill="#e02020"/><text x="517" y="976" text-anchor="middle" fill="#fff" style="font-family:'Liberation Sans',sans-serif;font-size:11.5px;font-weight:bold;font-style:italic">XM</text><circle cx="566.5" cy="968" r="6.3" fill="none" stroke="#f08a10" stroke-width="3"/><path d="M562 973 L554.5 981" stroke="#f08a10" stroke-width="3.4" stroke-linecap="round"/><path d="M601.5 962 H609 L611 964.5 H623 V981 H601.5 Z" fill="#f2b926"/><rect x="601.5" y="967" width="21.5" height="14" fill="#ffd75e"/><rect x="606" y="973" width="12.5" height="8" fill="#3d8fd8"/><rect x="609" y="977.5" width="6.5" height="3.5" fill="#ffd75e"/><rect x="650" y="964.5" width="23" height="15" rx="2" fill="#4a4a4a"/><rect x="656" y="960.5" width="9" height="5" rx="1" fill="#6a6a6a"/><rect x="651.5" y="962.5" width="4" height="3" fill="#777"/><circle cx="662" cy="972" r="6" fill="#888"/><circle cx="662" cy="972" r="4.6" fill="#1a4fa8"/><circle cx="663" cy="973" r="2.6" fill="#30b050"/><circle cx="660.5" cy="970.5" r="1.4" fill="#b8dcff"/><rect x="299" y="989.4" width="40" height="1.6" fill="#76b9ed"/><rect x="495" y="989.4" width="39" height="1.6" fill="#76b9ed"/><rect x="544" y="989.4" width="39" height="1.6" fill="#76b9ed"/><rect x="593" y="989.4" width="39" height="1.6" fill="#76b9ed"/><rect x="642" y="989.4" width="39" height="1.6" fill="#76b9ed"/><path d="M1524.5 975.5 L1530.5 969.5 L1536.5 975.5" fill="none" stroke="#fff" stroke-width="1.3"/><rect x="1544" y="953" width="22" height="38" fill="#3c3c3c"/><path d="M1548.5 979 C1550 972 1556 966.5 1562 964.5 C1561.5 970.5 1556 977 1549.5 978.6 Z" fill="#a070d8"/><path d="M1548 980 L1558 969" stroke="#6a3aa8" stroke-width="0.9"/><rect x="1574.5" y="966.5" width="12" height="8.5" fill="none" stroke="#fff" stroke-width="1.1"/><path d="M1577.5 979.5 H1584.5 M1581 975 V979.5" stroke="#fff" stroke-width="1.1"/><rect x="1571.5" y="965" width="4.5" height="4.5" fill="#212121" stroke="#fff" stroke-width="0.9"/><path d="M1596 969.5 H1598.6 L1602 966.2 V978.2 L1598.6 975 H1596 Z" fill="none" stroke="#fff" stroke-width="1.1" stroke-linejoin="round"/><path d="M1604.3 969.6 Q1606 972.3 1604.3 975 M1606.6 967.6 Q1609.4 972.3 1606.6 977 M1608.9 965.8 Q1612.8 972.3 1608.9 978.8" fill="none" stroke="#fff" stroke-width="1"/><text x="1621" y="976" fill="#fff" style="font-family:'Liberation Sans',sans-serif;font-size:11.2px">ENG</text><text x="1682.5" y="967.3" text-anchor="middle" fill="#fff" style="font-family:'Liberation Sans',sans-serif;font-size:11.2px">23:13</text><text x="1683" y="985" text-anchor="middle" fill="#fff" style="font-family:'Liberation Sans',sans-serif;font-size:11.2px">28/12/2565</text><path d="M1727.5 964.5 H1741.5 V975.5 H1733 L1730 978.8 V975.5 H1727.5 Z" fill="#fff"/><path d="M1730 967.5 H1739 M1730 970 H1739 M1730 972.5 H1737" stroke="#212121" stroke-width="0.9"/><circle cx="1743" cy="979.5" r="6.3" fill="#212121" stroke="#c8c8c8" stroke-width="1"/><text x="1743" y="983.5" text-anchor="middle" fill="#fff" style="font-family:'Liberation Sans',sans-serif;font-size:10.5px">6</text></svg>
</body></html>
